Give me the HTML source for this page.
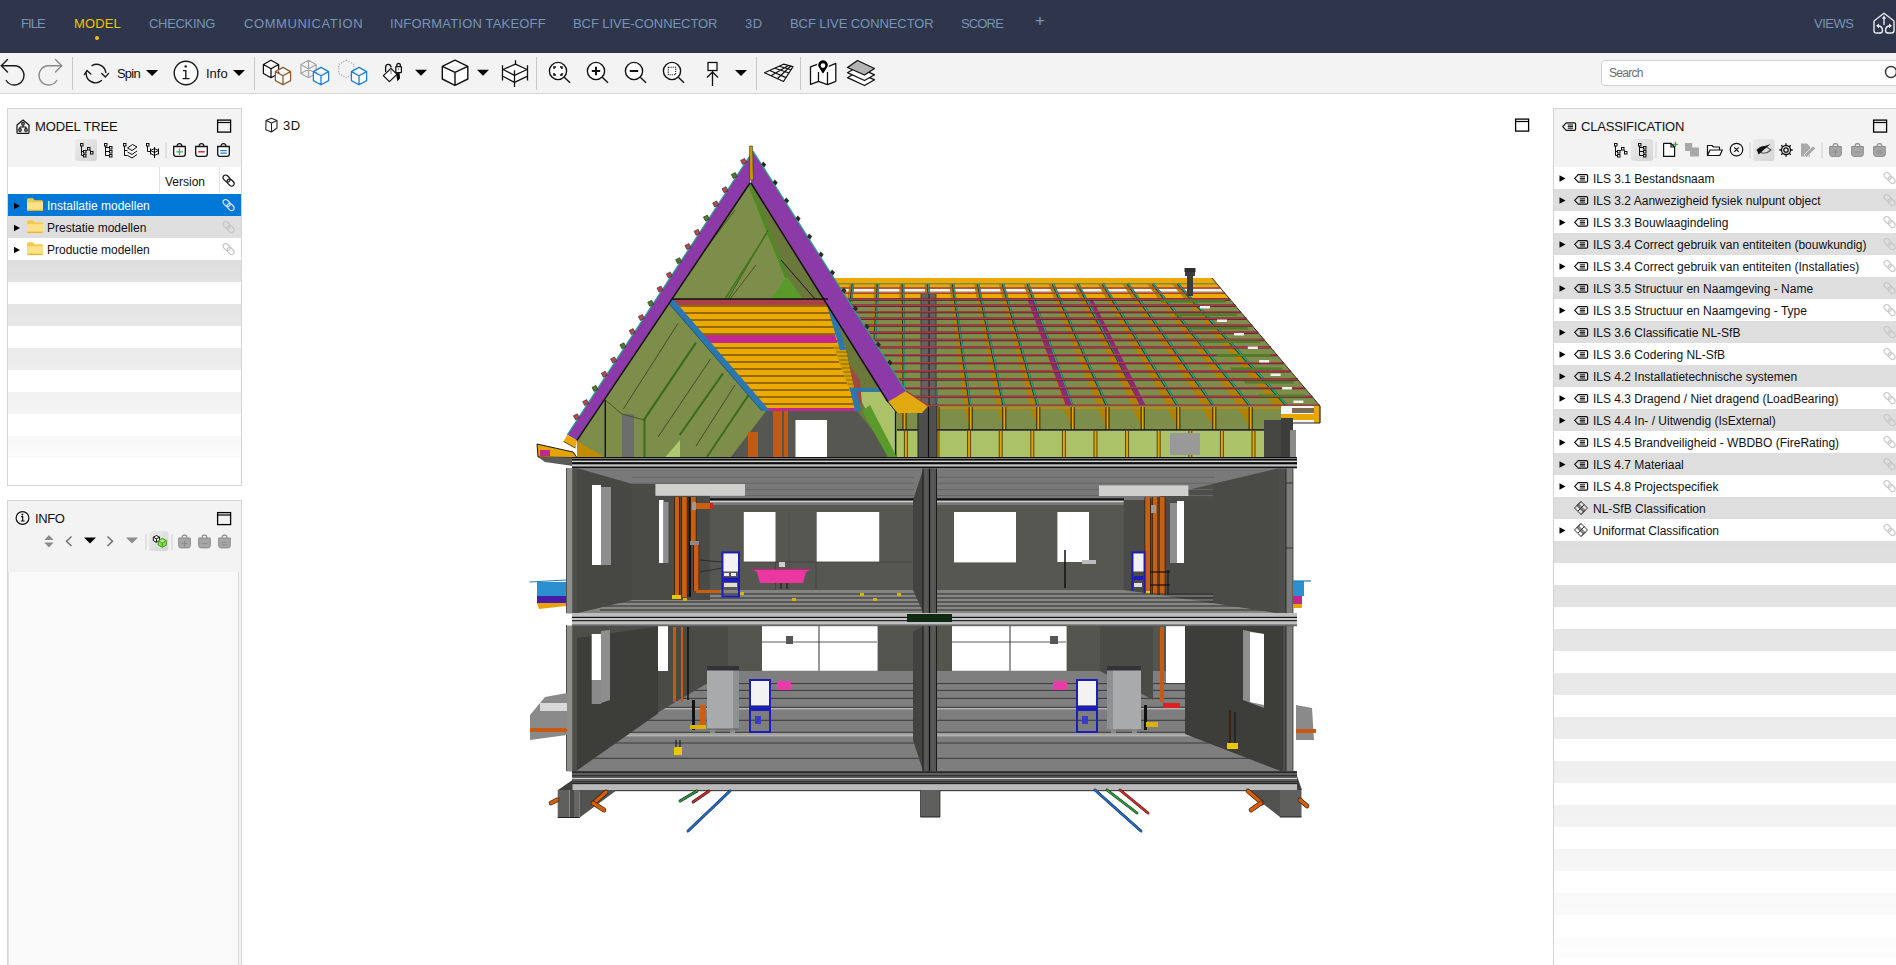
<!DOCTYPE html>
<html><head><meta charset="utf-8">
<style>
*{margin:0;padding:0;box-sizing:border-box}
html,body{width:1896px;height:965px;overflow:hidden;background:#fff;font-family:"Liberation Sans",sans-serif;position:relative}
.a{position:absolute}
#nav{left:0;top:0;width:1896px;height:53px;background:#2f364b}
.nv{position:absolute;top:16px;font-size:13px;color:#7594bb;letter-spacing:0.4px;white-space:nowrap;line-height:15px}
#tb{left:0;top:53px;width:1896px;height:41px;background:#f3f3f3;border-bottom:1px solid #d6d6d6}
.sep{position:absolute;width:1px;background:#c8c8c8}
.tt{position:absolute;font-size:13px;color:#111;white-space:nowrap;line-height:15px}
.panel{position:absolute;background:#f3f3f3;border:1px solid #d4d4d4}
.ptitle{position:absolute;font-size:13px;color:#111;letter-spacing:0.3px;white-space:nowrap;line-height:15px}
.row{position:absolute;height:22px;font-size:12px;color:#111;white-space:nowrap;line-height:22px;padding-top:1px}
svg{position:absolute;overflow:visible}
</style></head><body>
<div id="nav" class="a">
 <div class="nv" style="left:21px;letter-spacing:-0.93px">FILE</div>
 <div class="nv" style="left:74px;letter-spacing:0.15px;color:#f2c200">MODEL</div>
 <div class="a" style="left:95px;top:36px;width:4px;height:4px;border-radius:2px;background:#f2c200"></div>
 <div class="nv" style="left:149px;letter-spacing:-0.31px">CHECKING</div>
 <div class="nv" style="left:244px;letter-spacing:0.57px">COMMUNICATION</div>
 <div class="nv" style="left:390px;letter-spacing:0.18px">INFORMATION TAKEOFF</div>
 <div class="nv" style="left:573px;letter-spacing:-0.07px">BCF LIVE-CONNECTOR</div>
 <div class="nv" style="left:745px;letter-spacing:0.40px">3D</div>
 <div class="nv" style="left:790px;letter-spacing:-0.07px">BCF LIVE CONNECTOR</div>
 <div class="nv" style="left:961px;letter-spacing:-0.85px">SCORE</div>
 <div class="nv" style="left:1035px;font-size:17px;top:13px">+</div>
 <div class="nv" style="left:1814px;letter-spacing:-0.50px">VIEWS</div>
 <svg style="left:1872px;top:11px" width="24" height="24" viewBox="0 0 24 24"><g fill="none" stroke="#e8e8ee" stroke-width="1.4" stroke-linejoin="round" stroke-linecap="round"><path d="M8,22 H4.5 Q2,22 2,19.5 V10 L12,2.2 L22,10 V19.5 Q22,22 19.5,22 H16"/><path d="M8,22 Q10.5,22 10.5,19.5 Q10.5,15.2 6,14.8"/><path d="M16,22 Q13.5,22 13.5,19.5 Q13.5,15.2 18,14.8"/><path d="M12,13.5 V7"/></g><path d="M12,4.6 L9.8,7.8 H14.2 Z M4,14.8 L7,12.4 V17.2 Z M20,14.8 L17,12.4 V17.2 Z" fill="#e8e8ee"/></svg>
</div>
<div id="tb" class="a"></div>
<!-- TOOLBAR -->
<svg style="left:0;top:0" width="1896" height="100" viewBox="0 0 1896 100">
<g fill="none" stroke="#1a1a1a" stroke-width="1.4" stroke-linecap="round">
 <!-- undo -->
 <path d="M7.5,59.5 L1.3,65.8 L7.5,72"/>
 <path d="M1.5,65.8 H14.5 A9.6,9.6 0 1 1 6.2,80.5"/>
 <!-- redo gray -->
 <g stroke="#8a8a8a"><path d="M55.5,59.5 L61.7,65.8 L55.5,72"/><path d="M61.5,65.8 H48.5 A9.6,9.6 0 1 0 56.8,80.5"/></g>
 <!-- spin -->
 <path d="M92,65.6 A9.3,9.3 0 0 1 105.8,72.5"/>
 <path d="M101.5,80.5 A9.3,9.3 0 0 1 86.2,73"/>
 <path d="M101.8,73.6 L105.3,77 L108.6,73.4"/>
 <path d="M84.4,74.6 L87,70.6 L90.8,74"/>
 <!-- info circle -->
 <circle cx="186" cy="73" r="11.8" fill="#fff"/>
 <path d="M183,70.6 H185.8 V78.6 M182.6,78.6 H189.6" stroke-linecap="butt"/>
</g>
<circle cx="185.7" cy="66.4" r="1.2" fill="#1a1a1a"/>
<g fill="#000">
 <path d="M146,70 H158.2 L152.1,76 Z"/>
 <path d="M233,70 H245 L239,76 Z"/>
 <path d="M415,69.8 H427 L421,75.8 Z"/>
 <path d="M477,69.8 H489 L483,75.8 Z"/>
 <path d="M735,70 H747 L741,76 Z"/>
</g>
<g fill="#c8c8c8"><rect x="72" y="57" width="1" height="33"/><rect x="254" y="57" width="1" height="33"/><rect x="536" y="57" width="1" height="33"/><rect x="756" y="57" width="1" height="33"/><rect x="800" y="57" width="1" height="33"/></g>
<!-- cubes -->
<g stroke-width="1.3" stroke-linejoin="round" fill="#fff">
 <g stroke="#111"><path d="M271,60.3 L278.6,64.5 V73.5 L271,77.7 L263.4,73.5 V64.5 Z M263.4,64.5 L271,68.7 L278.6,64.5 M271,68.7 V77.7"/></g>
 <g stroke="#8f5b2a"><path d="M283,67.4 L290.6,71.6 V80.6 L283,84.8 L275.4,80.6 V71.6 Z M275.4,71.6 L283,75.8 L290.6,71.6 M283,75.8 V84.8"/></g>
 <g stroke="#a8a8a8" fill="none"><path d="M308.5,60.3 L316.1,64.5 V73.5 L308.5,77.7 L300.9,73.5 V64.5 Z M300.9,64.5 L316.1,73.5 M316.1,64.5 L300.9,73.5 M308.5,60.3 V77.7"/></g>
 <g stroke="#1a7fdc"><path d="M321,67.4 L328.6,71.6 V80.6 L321,84.8 L313.4,80.6 V71.6 Z M313.4,71.6 L321,75.8 L328.6,71.6 M321,75.8 V84.8"/></g>
 <g stroke="#a0a0a0" fill="none" stroke-dasharray="1,1.6"><path d="M346.3,60.3 L353.9,64.5 V73.5 L346.3,77.7 L338.7,73.5 V64.5 Z"/></g>
 <g stroke="#1a7fdc"><path d="M359,67.4 L366.6,71.6 V80.6 L359,84.8 L351.4,80.6 V71.6 Z M351.4,71.6 L359,75.8 L366.6,71.6 M359,75.8 V84.8"/></g>
 <g stroke="#111" stroke-width="1.4"><path d="M455,60.2 L467.8,66.4 V79 L455,85.3 L442.3,79 V66.4 Z M442.3,66.4 L455,72.4 L467.8,66.4 M455,72.4 V85.3"/></g>
</g>
<!-- paint bucket/lock -->
<g stroke="#111" stroke-width="1.3" fill="#fff" stroke-linejoin="round">
 <path d="M385.6,72 V67.2 Q385.6,64.3 388.3,64.3 Q391,64.3 391,67.5" fill="none"/>
 <path d="M383.4,75.6 L391,68.4 L397,74.4 L389.4,81.6 Z"/>
 <rect x="395.8" y="66.6" width="5.6" height="6" rx="0.5"/>
 <path d="M396.8,66.6 V65.6 Q396.8,63.4 398.6,63.4 Q400.4,63.4 400.4,65.6 V66.6" fill="none"/>
</g>
<path d="M391,70 V74" stroke="#888" stroke-width="1.2"/>
<path d="M398.1,68.5 L399.2,68.5 L398.65,70.6 Z" fill="#111"/>
<path d="M396.2,73.8 L399.6,72.8 L400,78.6 L397.3,81.2 Z" fill="#000"/>
<!-- storey -->
<g stroke="#111" stroke-width="1.3" fill="none" stroke-linejoin="round">
 <path d="M503,69.5 L515.4,64.2 L527,69.5 V76.3 L514.5,82.4 L503,76.3 Z" fill="#fff" stroke="none"/>
 <path d="M502.5,65.3 V80.6 M527.5,65.3 V80.6 M515.5,60.3 V64.2 M514.5,70.3 V87"/>
 <path d="M503,69.5 L515.4,64.2 L527,69.5 L514.5,75.4 Z"/>
 <path d="M503,76.3 L514.5,82.4 L527,76.3"/>
</g>
<!-- zoom icons -->
<g stroke="#111" stroke-width="1.4" fill="#fff">
 <circle cx="558" cy="71" r="8.6"/><path d="M564.3,77.3 L570,82.8"/>
 <circle cx="596" cy="71" r="8.6"/><path d="M602.3,77.3 L608,82.8"/>
 <circle cx="634" cy="71" r="8.6"/><path d="M640.3,77.3 L646,82.8"/>
 <circle cx="672" cy="71" r="8.6"/><path d="M678.3,77.3 L684,82.8"/>
</g>
<g stroke="#111" stroke-width="1.5" fill="none">
 <path d="M554,69 V67 H556 M560,67 H562 V69 M562,73 V75 H560 M556,75 H554 V73"/>
 <path d="M596,66.8 V75.2 M591.8,71 H600.2" stroke-width="2"/>
 <path d="M629.8,71 H638.2" stroke-width="2"/>
 <rect x="668.3" y="67.3" width="7.4" height="7.4" stroke-dasharray="1.2,1" stroke-width="1.1"/>
</g>
<!-- pin -->
<g stroke="#111" stroke-width="1.3" fill="#fff">
 <rect x="708" y="62.5" width="9" height="8"/>
 <path d="M712.5,70.5 V86 M707,77.5 L712.5,72 L718,77.5" fill="none"/>
</g>
<!-- grid plane -->
<g stroke="#111" stroke-width="1.2" fill="none" stroke-linejoin="round">
 <path d="M764.5,72.8 L783.5,64.2 L793,66.6 L783.5,81.5 Z"/>
 <path d="M771,75.8 L788.5,65.5 M777.3,78.8 L790.8,66 M769.8,70.5 L786,77.6 M775,68.2 L789,73 M779.3,66.2 L791,69.7"/>
</g>
<!-- map -->
<g stroke="#111" stroke-width="1.3" fill="#fff" stroke-linejoin="round">
 <path d="M810.5,66.8 L818.5,63.8 L827.5,66.8 L835.8,63.4 V81.3 L827.5,84.6 L818.5,81.3 L810.5,84.4 Z"/>
 <path d="M818.5,72 V81.3 M827.5,72 V84.6" fill="none"/>
</g>
<path d="M823,74.8 L818.2,67.4 A5.4,5.4 0 1 1 827.8,67.4 Z" fill="#000" stroke="#fff" stroke-width="1.2" stroke-linejoin="round"/>
<circle cx="823" cy="65.6" r="2.3" fill="#fff"/>
<!-- layers -->
<g stroke="#111" stroke-width="1.3" stroke-linejoin="round">
 <path d="M847.5,77.7 L857.5,71.8 L874.5,79.8 L864.5,85.5 Z" fill="#fff"/>
 <path d="M847.5,72.7 L857.5,66.8 L874.5,74.8 L864.5,80.5 Z" fill="#fff"/>
 <path d="M847.5,67.5 L857.5,60.5 L874.5,68.5 L864.5,75 Z" fill="#b3b3b3"/>
</g>
</svg>

<div class="tt" style="left:117px;top:66px;letter-spacing:-0.8px">Spin</div>
<div class="tt" style="left:206px;top:66px">Info</div>
<div class="a" style="left:1601px;top:60px;width:300px;height:26px;background:#fff;border:1px solid #d2d2d2;border-radius:4px"></div>
<div class="a" style="left:1609px;top:66px;font-size:12px;color:#6b6b6b;line-height:14px;letter-spacing:-0.7px">Search</div>
<svg style="left:1880px;top:64px" width="16" height="18"><circle cx="11" cy="8" r="5.5" fill="none" stroke="#333" stroke-width="1.4"/></svg>
<!-- PANELS -->
<!-- MODEL TREE PANEL -->
<div class="panel" style="left:7px;top:108px;width:235px;height:378px"></div>
<div class="a" style="left:8px;top:167px;width:233px;height:318px;background:#fff"></div>
<div class="a" style="left:8px;top:260px;width:233px;height:225px;background:repeating-linear-gradient(#dedede 0,#dedede 22px,#fff 22px,#fff 44px)"></div>
<div class="a" style="left:8px;top:260px;width:233px;height:225px;background:linear-gradient(rgba(255,255,255,0),#fff)"></div>
<div class="a" style="left:8px;top:216px;width:233px;height:22px;background:#dedede"></div>
<div class="a" style="left:8px;top:194px;width:233px;height:22px;background:#0078d7"></div>
<div class="a" style="left:159px;top:167px;width:1px;height:26px;background:#e4e4e4"></div>
<div class="a" style="left:219px;top:167px;width:1px;height:26px;background:#e4e4e4"></div>
<div class="ptitle" style="left:35px;top:119px;letter-spacing:-0.12px">MODEL TREE</div>
<div class="row" style="left:165px;top:170px;font-size:12px">Version</div>
<div class="row" style="left:47px;top:194px;color:#fff">Installatie modellen</div>
<div class="row" style="left:47px;top:216px">Prestatie modellen</div>
<div class="row" style="left:47px;top:238px">Productie modellen</div>

<!-- INFO PANEL -->
<div class="panel" style="left:7px;top:500px;width:235px;height:480px"></div>
<div class="a" style="left:8px;top:572px;width:231px;height:400px;background:#f9f9f9;border-right:1px solid #dadada;border-left:1px solid #e0e0e0"></div>
<div class="ptitle" style="left:35px;top:511px;letter-spacing:-0.4px">INFO</div>

<!-- CLASSIFICATION PANEL -->
<div class="panel" style="left:1553px;top:108px;width:360px;height:880px"></div>
<div class="a" style="left:1554px;top:167px;width:342px;height:798px;background:repeating-linear-gradient(#fff 0,#fff 22px,#dedede 22px,#dedede 44px)"></div>
<div class="a" style="left:1554px;top:541px;width:342px;height:424px;background:linear-gradient(rgba(255,255,255,0),rgba(255,255,255,0.97))"></div>
<div class="ptitle" style="left:1581px;top:119px;letter-spacing:-0.2px">CLASSIFICATION</div>
<div class="row" style="left:1593px;top:167px">ILS 3.1 Bestandsnaam</div>
<div class="row" style="left:1593px;top:189px">ILS 3.2 Aanwezigheid fysiek nulpunt object</div>
<div class="row" style="left:1593px;top:211px">ILS 3.3 Bouwlaagindeling</div>
<div class="row" style="left:1593px;top:233px">ILS 3.4 Correct gebruik van entiteiten (bouwkundig)</div>
<div class="row" style="left:1593px;top:255px">ILS 3.4 Correct gebruik van entiteiten (Installaties)</div>
<div class="row" style="left:1593px;top:277px">ILS 3.5 Structuur en Naamgeving - Name</div>
<div class="row" style="left:1593px;top:299px">ILS 3.5 Structuur en Naamgeving - Type</div>
<div class="row" style="left:1593px;top:321px">ILS 3.6 Classificatie NL-SfB</div>
<div class="row" style="left:1593px;top:343px">ILS 3.6 Codering NL-SfB</div>
<div class="row" style="left:1593px;top:365px">ILS 4.2 Installatietechnische systemen</div>
<div class="row" style="left:1593px;top:387px">ILS 4.3 Dragend / Niet dragend (LoadBearing)</div>
<div class="row" style="left:1593px;top:409px">ILS 4.4 In- / Uitwendig (IsExternal)</div>
<div class="row" style="left:1593px;top:431px">ILS 4.5 Brandveiligheid - WBDBO (FireRating)</div>
<div class="row" style="left:1593px;top:453px">ILS 4.7 Materiaal</div>
<div class="row" style="left:1593px;top:475px">ILS 4.8 Projectspecifiek</div>
<div class="row" style="left:1593px;top:497px">NL-SfB Classification</div>
<div class="row" style="left:1593px;top:519px">Uniformat Classification</div>

<!-- 3D label -->
<div class="ptitle" style="left:283px;top:118px;letter-spacing:0.5px">3D</div>
<svg style="left:0;top:0" width="1896" height="965" viewBox="0 0 1896 965">
<defs>
 <linearGradient id="actbg" x1="0" y1="0" x2="1" y2="1"><stop offset="0" stop-color="#ececec"/><stop offset="1" stop-color="#d4d4d4"/></linearGradient>
 <g id="tri"><path d="M0,0 L6,3.3 L0,6.6 Z" fill="#000"/></g>
 <g id="fold"><path d="M0,1.5 Q0,0 1.5,0 H6 L7.5,2 H14.5 Q16,2 16,3.5 V11 Q16,12.6 14.5,12.6 H1.5 Q0,12.6 0,11 Z" fill="#f7c948"/><path d="M0,4 H16 V11 Q16,12.6 14.5,12.6 H1.5 Q0,12.6 0,11 Z" fill="#fde18a"/><path d="M0,11.5 H16 V11 Q16,12.6 14.5,12.6 H1.5 Q0,12.6 0,11 Z" fill="#eaa800"/></g>
 <g id="link" fill="none" stroke-width="1.2"><rect x="-4" y="-2.6" width="8" height="5.2" rx="2.6" transform="translate(4.6,4.6) rotate(45)"/><rect x="-4" y="-2.6" width="8" height="5.2" rx="2.6" transform="translate(8.6,8.6) rotate(45)"/></g>
 <g id="tag"><path d="M0.7,4.6 L4.2,0.8 H12.5 Q13.6,0.8 13.6,1.9 V7.3 Q13.6,8.4 12.5,8.4 H4.2 Z" fill="none" stroke="#111" stroke-width="1.2" stroke-linejoin="round"/><path d="M5.8,3 H11 M5.8,4.6 H11 M5.8,6.2 H11" stroke="#111" stroke-width="1"/></g>
 <g id="maxi"><rect x="0.6" y="0.6" width="13" height="12" fill="none" stroke="#000" stroke-width="1.3"/><path d="M0.6,3 H13.6" stroke="#000" stroke-width="1.2"/></g>
 <g id="bag"><path d="M0.7,3.5 H12.3 V11 Q12.3,13.4 10,13.4 H3 Q0.7,13.4 0.7,11 Z" fill="#fff" stroke-width="1.3"/><path d="M4,3.5 Q4,0.6 6.5,0.6 Q9,0.6 9,3.5" fill="none" stroke-width="1.2"/></g>
 <g id="gbag"><path d="M0.7,3.5 H12.3 V11 Q12.3,13.4 10,13.4 H3 Q0.7,13.4 0.7,11 Z" fill="#a6a6a6" stroke="#8c8c8c" stroke-width="1"/><path d="M4,3.5 Q4,0.6 6.5,0.6 Q9,0.6 9,3.5" fill="none" stroke="#8c8c8c" stroke-width="1.1"/></g>
 <g id="treei"><g fill="none" stroke="#111" stroke-width="1"><rect x="0.5" y="0.5" width="2.5" height="2.5"/><rect x="3.5" y="7.5" width="2.5" height="2.5"/><rect x="3.5" y="11.5" width="2.5" height="2.5"/><rect x="7.5" y="4.5" width="2.5" height="2.5"/><rect x="10.5" y="8.5" width="2.5" height="2.5"/><path d="M1.5,3 V12.5 H3.5 M1.5,8.5 H3.5 M6,8 L7.5,6.5 M10,7 L11,8.5"/></g></g>
 <g id="treel"><g fill="none" stroke="#111" stroke-width="1"><rect x="0.5" y="0.5" width="2.5" height="2.5"/><rect x="5.5" y="3.5" width="2.5" height="2.5"/><rect x="5.5" y="7.5" width="2.5" height="2.5"/><rect x="5.5" y="11.5" width="2.5" height="2.5"/><path d="M1.5,3 V12.5 H5.5 M1.5,4.5 H5.5 M1.5,8.5 H5.5"/></g></g>
</defs>
<!-- model tree icons -->
<g stroke="#111" stroke-width="1.2" fill="none" stroke-linejoin="round">
 <path d="M17,125 L23,120 L29,125 V132.6 Q29,133.3 28.3,133.3 H17.7 Q17,133.3 17,132.6 Z"/>
 <circle cx="23" cy="123.7" r="1.3"/><circle cx="20" cy="130" r="1.3"/><circle cx="26" cy="130" r="1.3"/><path d="M23,125 V127 H20 V128.7 M23,127 H26 V128.7"/>
</g>
<use href="#maxi" x="217" y="119.5"/>
<rect x="75" y="139" width="22" height="22" rx="3" fill="url(#actbg)"/>
<use href="#treei" x="80" y="143"/>
<use href="#treel" x="104" y="143"/>
<g fill="none" stroke="#111" stroke-width="1"><rect x="123.5" y="143.5" width="2.5" height="2.5"/><path d="M124.5,146 V155.5 H127.5 M124.5,150.5 H127.5"/><path d="M127.5,148 L132.5,144.5 L137,147 L132,150.5 Z M127.5,152 L132,154.5 L137,151 M127.5,155.5 L132,158 L137,154.5"/></g>
<g fill="none" stroke="#111" stroke-width="1"><rect x="146.5" y="143.5" width="2.5" height="2.5"/><path d="M147.5,146 V151.5 H150 M150.5,148.5 V154.5 M158.5,148.5 V154.5 M154.5,147 V158 M150.5,150.5 L154.5,148.5 L158.5,150.5 L154.5,152.5 Z M150.5,153.5 L154.5,155.5 L158.5,153.5"/></g>
<rect x="165.5" y="142" width="1" height="16" fill="#d0d0d0"/>
<g stroke="#111"><use href="#bag" x="173" y="143"/><use href="#bag" x="195" y="143"/><use href="#bag" x="217" y="143"/></g>
<path d="M179.5,148.5 V155 M176.3,151.8 H182.7" stroke="#1db954" stroke-width="1.3"/>
<path d="M198.3,151.8 H204.7" stroke="#e81123" stroke-width="1.4"/>
<path d="M220.3,150.6 H226.7 M220.3,153.2 H226.7" stroke="#1a7fdc" stroke-width="1.2"/>
<g stroke="#111"><use href="#link" x="222" y="174"/></g>
<!-- tree rows -->
<use href="#tri" x="14" y="202.7"/><use href="#tri" x="14" y="224.7"/><use href="#tri" x="14" y="246.7"/>
<use href="#fold" x="27" y="198.2"/><use href="#fold" x="27" y="220.2"/><use href="#fold" x="27" y="242.2"/>
<g stroke="#e8e8ff"><use href="#link" x="222" y="198.5"/></g>
<g stroke="#c4c4c4"><use href="#link" x="222" y="220.5"/><use href="#link" x="222" y="242.5"/></g>
<!-- info panel icons -->
<g stroke="#111" stroke-width="1.2" fill="none"><circle cx="22.5" cy="518" r="6.4"/><path d="M21,516.6 H22.7 V521 M20.8,521 H24.6"/></g>
<circle cx="22.4" cy="514.5" r="0.9" fill="#111"/>
<use href="#maxi" x="217" y="512"/>
<path d="M44.3,540 L49,535 L53.6,540 Z M44.3,542.5 L49,547.5 L53.6,542.5 Z" fill="#8c8c8c"/>
<path d="M71.5,536.5 L66.5,541.2 L71.5,546" fill="none" stroke="#6f6f6f" stroke-width="1.5"/>
<path d="M84,537.5 H96 L90,543.5 Z" fill="#000"/>
<path d="M107.5,536.5 L112.5,541.2 L107.5,546" fill="none" stroke="#6f6f6f" stroke-width="1.5"/>
<path d="M126,537.5 H138 L132,543.5 Z" fill="#8c8c8c"/>
<rect x="145.5" y="534" width="1" height="16" fill="#d0d0d0"/>
<rect x="149" y="531" width="19.5" height="20" rx="3" fill="url(#actbg)"/>
<g stroke="#111" stroke-width="1" fill="#fff"><path d="M156.4,535.5 L159.5,537.2 V540.6 L156.4,542.3 L153.3,540.6 V537.2 Z M153.3,537.2 L156.4,538.9 L159.5,537.2 M156.4,538.9 V542.3"/></g>
<g stroke="#3d9a1a" stroke-width="0.9" fill="#7ce03a"><path d="M162.3,538.3 L166.4,540.6 V545 L162.3,547.3 L158.2,545 V540.6 Z M158.2,540.6 L162.3,542.9 L166.4,540.6 M162.3,542.9 V547.3"/></g>
<rect x="171.5" y="534" width="1" height="16" fill="#d0d0d0"/>
<use href="#gbag" x="178" y="534.5"/><use href="#gbag" x="198" y="534.5"/><use href="#gbag" x="218" y="534.5"/>
<path d="M184.5,540.8 V546.5 M181.7,543.6 H187.3" stroke="#8c8c8c" stroke-width="1"/>
<path d="M201.7,543.6 H207.3" stroke="#8c8c8c" stroke-width="1"/>
<path d="M221.7,542.4 H227.3 M221.7,544.8 H227.3" stroke="#8c8c8c" stroke-width="1"/>
<!-- 3D label icon -->
<g stroke="#222" stroke-width="1.1" fill="none" stroke-linejoin="round"><path d="M266,120.5 L271.5,118.3 L277,120.5 V128 L271.5,132 L265.8,129.8 Z M266,120.5 L271.5,123 L277,120.5 M271.5,123 V132"/></g>
<use href="#maxi" x="1515" y="118.5"/>
<!-- classification icons -->
<use href="#tag" x="1562" y="122"/>
<use href="#maxi" x="1873" y="119.5"/>
<use href="#treei" x="1614" y="143"/>
<rect x="1631" y="139" width="22" height="22" rx="3" fill="url(#actbg)"/>
<use href="#treel" x="1638" y="143"/>
<rect x="1655.5" y="142" width="1" height="16" fill="#d0d0d0"/>
<path d="M1663.6,143.4 H1671 L1674.6,147 V156.4 H1663.6 Z M1671,143.4 V147 H1674.6" fill="#fff" stroke="#111" stroke-width="1.2" stroke-linejoin="round"/>
<path d="M1675.5,141.8 V147 M1673,144.4 H1678" stroke="#1db954" stroke-width="1.2"/>
<path d="M1685,143 H1692.2 V147.5 H1699 V156.6 H1690 V151 H1685 Z" fill="#a8a8a8"/>
<path d="M1707.5,155.5 V145.5 H1712 L1713.5,147 H1719.5 V150 M1707.5,155.5 L1710,150 H1722.3 L1719.8,155.5 Z" fill="#fff" stroke="#111" stroke-width="1.2" stroke-linejoin="round"/>
<g fill="none" stroke="#111" stroke-width="1.2"><circle cx="1736.5" cy="149.6" r="6.3"/><path d="M1734.3,147.4 L1738.7,151.8 M1738.7,147.4 L1734.3,151.8"/></g>
<rect x="1749.5" y="142" width="1" height="16" fill="#d0d0d0"/>
<rect x="1753" y="139" width="21.5" height="22" rx="3" fill="url(#actbg)"/>
<path d="M1757,150 Q1763.5,143.5 1771,150 Q1763.5,156.5 1757,150 Z" fill="none" stroke="#555" stroke-width="1.1"/>
<path d="M1757,150 Q1761,145.5 1765,146 L1770.5,144 L1758.5,154.5 Z" fill="#111"/>
<g fill="none" stroke="#111" stroke-width="1.3"><circle cx="1786" cy="150" r="2.2"/><path d="M1786,143.3 V145.3 M1786,154.7 V156.7 M1779.3,150 H1781.3 M1790.7,150 H1792.7 M1781.3,145.3 L1782.7,146.7 M1789.3,153.3 L1790.7,154.7 M1781.3,154.7 L1782.7,153.3 M1789.3,146.7 L1790.7,145.3"/><circle cx="1786" cy="150" r="4.5"/></g>
<path d="M1801,143.5 H1807 L1810,146.5 V156.4 H1801 Z" fill="#a8a8a8"/>
<path d="M1804,155 L1813,146 L1815.5,148.5 L1806.5,157.5 Z" fill="#a8a8a8" stroke="#f3f3f3" stroke-width="0.8"/>
<rect x="1821.5" y="142" width="1" height="16" fill="#d0d0d0"/>
<use href="#gbag" x="1829" y="143"/><use href="#gbag" x="1851" y="143"/><use href="#gbag" x="1873" y="143"/>
<path d="M1835.5,149 V155 M1832.5,152 H1838.5" stroke="#8c8c8c" stroke-width="1"/>
<path d="M1854.5,152 H1860.5" stroke="#8c8c8c" stroke-width="1"/>
<path d="M1876.5,150.8 H1882.5 M1876.5,153.2 H1882.5" stroke="#8c8c8c" stroke-width="1"/>
<!-- classification rows -->
<g id="crows">
<use href="#tri" x="1559.5" y="175.2"/>
<use href="#tag" x="1574" y="173.8"/>
<g stroke="#c8c8c8"><use href="#link" x="1883" y="171.5"/></g>
<use href="#tri" x="1559.5" y="197.2"/>
<use href="#tag" x="1574" y="195.8"/>
<g stroke="#c8c8c8"><use href="#link" x="1883" y="193.5"/></g>
<use href="#tri" x="1559.5" y="219.2"/>
<use href="#tag" x="1574" y="217.8"/>
<g stroke="#c8c8c8"><use href="#link" x="1883" y="215.5"/></g>
<use href="#tri" x="1559.5" y="241.2"/>
<use href="#tag" x="1574" y="239.8"/>
<g stroke="#c8c8c8"><use href="#link" x="1883" y="237.5"/></g>
<use href="#tri" x="1559.5" y="263.2"/>
<use href="#tag" x="1574" y="261.8"/>
<g stroke="#c8c8c8"><use href="#link" x="1883" y="259.5"/></g>
<use href="#tri" x="1559.5" y="285.2"/>
<use href="#tag" x="1574" y="283.8"/>
<g stroke="#c8c8c8"><use href="#link" x="1883" y="281.5"/></g>
<use href="#tri" x="1559.5" y="307.2"/>
<use href="#tag" x="1574" y="305.8"/>
<g stroke="#c8c8c8"><use href="#link" x="1883" y="303.5"/></g>
<use href="#tri" x="1559.5" y="329.2"/>
<use href="#tag" x="1574" y="327.8"/>
<g stroke="#c8c8c8"><use href="#link" x="1883" y="325.5"/></g>
<use href="#tri" x="1559.5" y="351.2"/>
<use href="#tag" x="1574" y="349.8"/>
<g stroke="#c8c8c8"><use href="#link" x="1883" y="347.5"/></g>
<use href="#tri" x="1559.5" y="373.2"/>
<use href="#tag" x="1574" y="371.8"/>
<use href="#tri" x="1559.5" y="395.2"/>
<use href="#tag" x="1574" y="393.8"/>
<g stroke="#c8c8c8"><use href="#link" x="1883" y="391.5"/></g>
<use href="#tri" x="1559.5" y="417.2"/>
<use href="#tag" x="1574" y="415.8"/>
<g stroke="#c8c8c8"><use href="#link" x="1883" y="413.5"/></g>
<use href="#tri" x="1559.5" y="439.2"/>
<use href="#tag" x="1574" y="437.8"/>
<g stroke="#c8c8c8"><use href="#link" x="1883" y="435.5"/></g>
<use href="#tri" x="1559.5" y="461.2"/>
<use href="#tag" x="1574" y="459.8"/>
<g stroke="#c8c8c8"><use href="#link" x="1883" y="457.5"/></g>
<use href="#tri" x="1559.5" y="483.2"/>
<use href="#tag" x="1574" y="481.8"/>
<g stroke="#c8c8c8"><use href="#link" x="1883" y="479.5"/></g>
<g transform="translate(1574,501.0)" fill="none" stroke="#333" stroke-width="1"><path d="M7,0.5 L13.5,7 L7,13.5 L0.5,7 Z"/><path d="M3.5,4 L10,10.5 M4,10 L10.5,3.5 M7,0.5 L3,4.5 L9.5,11 M7,13.5 L11,9.5 L4.5,3"/></g>
<use href="#tri" x="1559.5" y="527.2"/>
<g transform="translate(1574,523.0)" fill="none" stroke="#333" stroke-width="1"><path d="M7,0.5 L13.5,7 L7,13.5 L0.5,7 Z"/><path d="M3.5,4 L10,10.5 M4,10 L10.5,3.5 M7,0.5 L3,4.5 L9.5,11 M7,13.5 L11,9.5 L4.5,3"/></g>
<g stroke="#c8c8c8"><use href="#link" x="1883" y="523.5"/></g>
</g>
</svg>


<!-- 3D -->
<svg style="left:0;top:0" width="1896" height="965" viewBox="0 0 1896 965" shape-rendering="geometricPrecision">
<polygon points="800.0,278.0 1212.0,278.0 1320.0,406.0 880.0,406.0" fill="#7d8d4a" />
<polygon points="800.0,278.0 1212.0,278.0 1216.2,283.0 800.0,283.0" fill="#eca900" />
<polygon points="800.0,284.5 1217.5,284.5 1221.3,289.0 800.0,289.0" fill="#eca900" />
<polygon points="800.0,292.0 1223.8,292.0 1228.9,298.0 800.0,298.0" fill="#eca900" />
<polygon points="800.0,289.0 1221.3,289.0 1223.4,291.5 800.0,291.5" fill="#f4f4f0" />
<polygon points="824.5,284.0 828.0,284.0 805.0,406.0 799.5,406.0" fill="#b08200" />
<line x1="828.0" y1="284.0" x2="805.0" y2="406.0" stroke="#0e3a30" stroke-width="2.60" />
<line x1="828.4" y1="284.0" x2="805.4" y2="406.0" stroke="#1fa886" stroke-width="1.60" />
<polygon points="849.5,284.0 853.0,284.0 838.0,406.0 832.5,406.0" fill="#b08200" />
<line x1="853.0" y1="284.0" x2="838.0" y2="406.0" stroke="#0e3a30" stroke-width="2.60" />
<line x1="853.4" y1="284.0" x2="838.4" y2="406.0" stroke="#1fa886" stroke-width="1.60" />
<polygon points="874.5,284.0 878.0,284.0 871.0,406.0 865.5,406.0" fill="#b08200" />
<line x1="878.0" y1="284.0" x2="871.0" y2="406.0" stroke="#0e3a30" stroke-width="2.60" />
<line x1="878.4" y1="284.0" x2="871.4" y2="406.0" stroke="#1fa886" stroke-width="1.60" />
<polygon points="899.5,284.0 903.0,284.0 904.0,406.0 898.5,406.0" fill="#b08200" />
<line x1="903.0" y1="284.0" x2="904.0" y2="406.0" stroke="#0e3a30" stroke-width="2.60" />
<line x1="903.4" y1="284.0" x2="904.4" y2="406.0" stroke="#1fa886" stroke-width="1.60" />
<polygon points="924.5,284.0 928.0,284.0 937.0,406.0 931.5,406.0" fill="#b08200" />
<line x1="928.0" y1="284.0" x2="937.0" y2="406.0" stroke="#0e3a30" stroke-width="2.60" />
<line x1="928.4" y1="284.0" x2="937.4" y2="406.0" stroke="#1fa886" stroke-width="1.60" />
<polygon points="949.2,284.0 953.0,284.0 970.2,406.0 964.0,406.0" fill="#b08200" />
<line x1="953.0" y1="284.0" x2="970.2" y2="406.0" stroke="#0e3a30" stroke-width="2.60" />
<line x1="953.4" y1="284.0" x2="970.6" y2="406.0" stroke="#1fa886" stroke-width="1.60" />
<polygon points="974.0,284.0 978.0,284.0 1003.8,406.0 996.9,406.0" fill="#b08200" />
<line x1="978.0" y1="284.0" x2="1003.8" y2="406.0" stroke="#0e3a30" stroke-width="2.60" />
<line x1="978.4" y1="284.0" x2="1004.2" y2="406.0" stroke="#1fa886" stroke-width="1.60" />
<polygon points="998.8,284.0 1003.0,284.0 1037.8,406.0 1030.2,406.0" fill="#b08200" />
<line x1="1003.0" y1="284.0" x2="1037.8" y2="406.0" stroke="#0e3a30" stroke-width="2.60" />
<line x1="1003.4" y1="284.0" x2="1038.2" y2="406.0" stroke="#1fa886" stroke-width="1.60" />
<polygon points="1023.5,284.0 1028.0,284.0 1072.2,406.0 1063.9,406.0" fill="#b08200" />
<line x1="1028.0" y1="284.0" x2="1072.2" y2="406.0" stroke="#0e3a30" stroke-width="2.60" />
<line x1="1028.4" y1="284.0" x2="1072.6" y2="406.0" stroke="#1fa886" stroke-width="1.60" />
<polygon points="1048.2,284.0 1053.0,284.0 1107.0,406.0 1098.0,406.0" fill="#b08200" />
<line x1="1053.0" y1="284.0" x2="1107.0" y2="406.0" stroke="#0e3a30" stroke-width="2.60" />
<line x1="1053.4" y1="284.0" x2="1107.4" y2="406.0" stroke="#1fa886" stroke-width="1.60" />
<polygon points="1073.0,284.0 1078.0,284.0 1142.2,406.0 1132.5,406.0" fill="#b08200" />
<line x1="1078.0" y1="284.0" x2="1142.2" y2="406.0" stroke="#0e3a30" stroke-width="2.60" />
<line x1="1078.4" y1="284.0" x2="1142.6" y2="406.0" stroke="#1fa886" stroke-width="1.60" />
<polygon points="1097.8,284.0 1103.0,284.0 1177.8,406.0 1167.4,406.0" fill="#b08200" />
<line x1="1103.0" y1="284.0" x2="1177.8" y2="406.0" stroke="#0e3a30" stroke-width="2.60" />
<line x1="1103.4" y1="284.0" x2="1178.2" y2="406.0" stroke="#1fa886" stroke-width="1.60" />
<polygon points="1122.5,284.0 1128.0,284.0 1213.8,406.0 1202.7,406.0" fill="#b08200" />
<line x1="1128.0" y1="284.0" x2="1213.8" y2="406.0" stroke="#0e3a30" stroke-width="2.60" />
<line x1="1128.4" y1="284.0" x2="1214.2" y2="406.0" stroke="#1fa886" stroke-width="1.60" />
<polygon points="1147.2,284.0 1153.0,284.0 1250.2,406.0 1238.4,406.0" fill="#b08200" />
<line x1="1153.0" y1="284.0" x2="1250.2" y2="406.0" stroke="#0e3a30" stroke-width="2.60" />
<line x1="1153.4" y1="284.0" x2="1250.6" y2="406.0" stroke="#1fa886" stroke-width="1.60" />
<polygon points="1172.0,284.0 1178.0,284.0 1287.0,406.0 1274.5,406.0" fill="#b08200" />
<line x1="1178.0" y1="284.0" x2="1287.0" y2="406.0" stroke="#0e3a30" stroke-width="2.60" />
<line x1="1178.4" y1="284.0" x2="1287.4" y2="406.0" stroke="#1fa886" stroke-width="1.60" />
<rect x="921.0" y="294.0" width="15.0" height="164.0" fill="#62625f" />
<line x1="921.0" y1="294.0" x2="921.0" y2="458.0" stroke="#333" stroke-width="0.80" />
<line x1="929.0" y1="294.0" x2="929.0" y2="458.0" stroke="#1a1a1a" stroke-width="1.00" />
<line x1="936.0" y1="294.0" x2="936.0" y2="458.0" stroke="#333" stroke-width="0.80" />
<polygon points="1027.0,298.0 1032.0,298.0 1072.0,406.0 1066.0,406.0" fill="#8e2a7a" />
<polygon points="1088.0,298.0 1092.0,298.0 1146.0,406.0 1140.0,406.0" fill="#8e2a7a" />
<line x1="800.0" y1="288.0" x2="1220.4" y2="288.0" stroke="#a43d4c" stroke-width="1.40" />
<line x1="800.0" y1="293.3" x2="1224.9" y2="293.3" stroke="#a43d4c" stroke-width="1.40" />
<line x1="800.0" y1="299.5" x2="1230.1" y2="299.5" stroke="#5a1e28" stroke-width="2.40" />
<line x1="800.0" y1="299.2" x2="1230.1" y2="299.2" stroke="#a43d4c" stroke-width="1.60" />
<line x1="800.0" y1="305.7" x2="1235.4" y2="305.7" stroke="#5a1e28" stroke-width="2.40" />
<line x1="800.0" y1="305.4" x2="1235.4" y2="305.4" stroke="#a43d4c" stroke-width="1.60" />
<line x1="800.0" y1="312.1" x2="1240.8" y2="312.1" stroke="#5a1e28" stroke-width="2.40" />
<line x1="800.0" y1="311.8" x2="1240.8" y2="311.8" stroke="#a43d4c" stroke-width="1.60" />
<line x1="800.0" y1="318.8" x2="1246.4" y2="318.8" stroke="#5a1e28" stroke-width="2.40" />
<line x1="800.0" y1="318.5" x2="1246.4" y2="318.5" stroke="#a43d4c" stroke-width="1.60" />
<line x1="800.0" y1="325.6" x2="1252.2" y2="325.6" stroke="#5a1e28" stroke-width="2.40" />
<line x1="800.0" y1="325.3" x2="1252.2" y2="325.3" stroke="#a43d4c" stroke-width="1.60" />
<line x1="800.0" y1="332.7" x2="1258.1" y2="332.7" stroke="#5a1e28" stroke-width="2.40" />
<line x1="800.0" y1="332.4" x2="1258.1" y2="332.4" stroke="#a43d4c" stroke-width="1.60" />
<line x1="800.0" y1="340.0" x2="1264.3" y2="340.0" stroke="#5a1e28" stroke-width="2.40" />
<line x1="800.0" y1="339.7" x2="1264.3" y2="339.7" stroke="#a43d4c" stroke-width="1.60" />
<line x1="800.0" y1="347.4" x2="1270.6" y2="347.4" stroke="#5a1e28" stroke-width="2.40" />
<line x1="800.0" y1="347.1" x2="1270.6" y2="347.1" stroke="#a43d4c" stroke-width="1.60" />
<line x1="800.0" y1="355.1" x2="1277.1" y2="355.1" stroke="#5a1e28" stroke-width="2.40" />
<line x1="800.0" y1="354.8" x2="1277.1" y2="354.8" stroke="#a43d4c" stroke-width="1.60" />
<line x1="800.0" y1="363.1" x2="1283.8" y2="363.1" stroke="#5a1e28" stroke-width="2.40" />
<line x1="800.0" y1="362.8" x2="1283.8" y2="362.8" stroke="#a43d4c" stroke-width="1.60" />
<line x1="800.0" y1="371.2" x2="1290.6" y2="371.2" stroke="#5a1e28" stroke-width="2.40" />
<line x1="800.0" y1="370.9" x2="1290.6" y2="370.9" stroke="#a43d4c" stroke-width="1.60" />
<line x1="800.0" y1="379.5" x2="1297.7" y2="379.5" stroke="#5a1e28" stroke-width="2.40" />
<line x1="800.0" y1="379.2" x2="1297.7" y2="379.2" stroke="#a43d4c" stroke-width="1.60" />
<line x1="800.0" y1="388.1" x2="1304.9" y2="388.1" stroke="#5a1e28" stroke-width="2.40" />
<line x1="800.0" y1="387.8" x2="1304.9" y2="387.8" stroke="#a43d4c" stroke-width="1.60" />
<line x1="800.0" y1="396.9" x2="1312.3" y2="396.9" stroke="#5a1e28" stroke-width="2.40" />
<line x1="800.0" y1="396.6" x2="1312.3" y2="396.6" stroke="#a43d4c" stroke-width="1.60" />
<line x1="800.0" y1="405.9" x2="1319.9" y2="405.9" stroke="#5a1e28" stroke-width="2.40" />
<line x1="800.0" y1="405.6" x2="1319.9" y2="405.6" stroke="#a43d4c" stroke-width="1.60" />
<line x1="800.0" y1="406.0" x2="1320.0" y2="406.0" stroke="#a43d4c" stroke-width="2.00" />
<polygon points="1160.0,300.0 1224.6,300.0 1226.1,302.5 1161.5,302.5" fill="#4f7d2a" />
<rect x="1200.0" y="306.0" width="10.0" height="2.5" fill="#f0f0f0" />
<polygon points="1174.0,313.5 1236.0,313.5 1237.5,316.0 1175.5,316.0" fill="#4f7d2a" />
<rect x="1217.0" y="319.5" width="10.0" height="2.5" fill="#f0f0f0" />
<polygon points="1188.0,327.0 1247.3,327.0 1248.8,329.5 1189.5,329.5" fill="#4f7d2a" />
<rect x="1234.0" y="333.0" width="10.0" height="2.5" fill="#f0f0f0" />
<polygon points="1202.0,340.5 1258.7,340.5 1260.2,343.0 1203.5,343.0" fill="#4f7d2a" />
<rect x="1247.8" y="346.5" width="10.0" height="2.5" fill="#f0f0f0" />
<polygon points="1216.0,354.0 1270.1,354.0 1271.6,356.5 1217.5,356.5" fill="#4f7d2a" />
<rect x="1259.2" y="360.0" width="10.0" height="2.5" fill="#f0f0f0" />
<polygon points="1230.0,367.5 1281.5,367.5 1283.0,370.0 1231.5,370.0" fill="#4f7d2a" />
<rect x="1270.6" y="373.5" width="10.0" height="2.5" fill="#f0f0f0" />
<polygon points="1244.0,381.0 1292.9,381.0 1294.4,383.5 1245.5,383.5" fill="#4f7d2a" />
<rect x="1282.0" y="387.0" width="10.0" height="2.5" fill="#f0f0f0" />
<polygon points="1258.0,394.5 1304.3,394.5 1305.8,397.0 1259.5,397.0" fill="#4f7d2a" />
<rect x="1293.4" y="400.5" width="10.0" height="2.5" fill="#f0f0f0" />
<line x1="1212.0" y1="278.0" x2="1320.0" y2="406.0" stroke="#3a3020" stroke-width="1.00" />
<polygon points="1185.0,270.0 1195.0,270.0 1195.0,276.0 1193.0,276.0 1193.0,296.0 1187.0,296.0 1187.0,276.0 1185.0,276.0" fill="#3c3c3c" />
<rect x="1184.5" y="268.0" width="11.0" height="4.0" fill="#2e2e2e" />
<polygon points="1281.0,406.0 1320.0,406.0 1320.0,423.0 1286.0,423.0" fill="#f4f4f2" />
<rect x="1281.0" y="414.0" width="39.0" height="6.0" fill="#e6a800" />
<rect x="1314.0" y="406.0" width="6.0" height="17.0" fill="#e6a800" />
<rect x="1292.0" y="408.0" width="22.0" height="5.0" fill="#7a6a50" />
<line x1="1281.0" y1="423.0" x2="1320.0" y2="423.0" stroke="#222" stroke-width="1.20" />
<line x1="1320.0" y1="406.0" x2="1320.0" y2="423.0" stroke="#222" stroke-width="1.20" />
<polygon points="897.0,406.0 1281.0,406.0 1281.0,430.0 897.0,430.0" fill="#7d8d4a" />
<rect x="897.0" y="407.0" width="384.0" height="2.0" fill="#b88a10" />
<polygon points="865.5,409.0 871.0,409.0 871.0,428.0" fill="#b08200" />
<rect x="870.0" y="407.0" width="3.0" height="23.0" fill="#e6a400" />
<line x1="870.0" y1="407.0" x2="870.0" y2="430.0" stroke="#111" stroke-width="0.90" />
<line x1="873.0" y1="407.0" x2="873.0" y2="430.0" stroke="#111" stroke-width="0.90" />
<polygon points="898.5,409.0 904.0,409.0 904.0,428.0" fill="#b08200" />
<rect x="903.0" y="407.0" width="3.0" height="23.0" fill="#e6a400" />
<line x1="903.0" y1="407.0" x2="903.0" y2="430.0" stroke="#111" stroke-width="0.90" />
<line x1="906.0" y1="407.0" x2="906.0" y2="430.0" stroke="#111" stroke-width="0.90" />
<polygon points="931.5,409.0 937.0,409.0 937.0,428.0" fill="#b08200" />
<rect x="936.0" y="407.0" width="3.0" height="23.0" fill="#e6a400" />
<line x1="936.0" y1="407.0" x2="936.0" y2="430.0" stroke="#111" stroke-width="0.90" />
<line x1="939.0" y1="407.0" x2="939.0" y2="430.0" stroke="#111" stroke-width="0.90" />
<polygon points="964.0,409.0 970.2,409.0 970.2,428.0" fill="#b08200" />
<rect x="969.2" y="407.0" width="3.0" height="23.0" fill="#e6a400" />
<line x1="969.2" y1="407.0" x2="969.2" y2="430.0" stroke="#111" stroke-width="0.90" />
<line x1="972.2" y1="407.0" x2="972.2" y2="430.0" stroke="#111" stroke-width="0.90" />
<polygon points="996.9,409.0 1003.8,409.0 1003.8,428.0" fill="#b08200" />
<rect x="1002.8" y="407.0" width="3.0" height="23.0" fill="#e6a400" />
<line x1="1002.8" y1="407.0" x2="1002.8" y2="430.0" stroke="#111" stroke-width="0.90" />
<line x1="1005.8" y1="407.0" x2="1005.8" y2="430.0" stroke="#111" stroke-width="0.90" />
<polygon points="1030.2,409.0 1037.8,409.0 1037.8,428.0" fill="#b08200" />
<rect x="1036.8" y="407.0" width="3.0" height="23.0" fill="#e6a400" />
<line x1="1036.8" y1="407.0" x2="1036.8" y2="430.0" stroke="#111" stroke-width="0.90" />
<line x1="1039.8" y1="407.0" x2="1039.8" y2="430.0" stroke="#111" stroke-width="0.90" />
<polygon points="1063.9,409.0 1072.2,409.0 1072.2,428.0" fill="#b08200" />
<rect x="1071.2" y="407.0" width="3.0" height="23.0" fill="#e6a400" />
<line x1="1071.2" y1="407.0" x2="1071.2" y2="430.0" stroke="#111" stroke-width="0.90" />
<line x1="1074.2" y1="407.0" x2="1074.2" y2="430.0" stroke="#111" stroke-width="0.90" />
<polygon points="1098.0,409.0 1107.0,409.0 1107.0,428.0" fill="#b08200" />
<rect x="1106.0" y="407.0" width="3.0" height="23.0" fill="#e6a400" />
<line x1="1106.0" y1="407.0" x2="1106.0" y2="430.0" stroke="#111" stroke-width="0.90" />
<line x1="1109.0" y1="407.0" x2="1109.0" y2="430.0" stroke="#111" stroke-width="0.90" />
<polygon points="1132.5,409.0 1142.2,409.0 1142.2,428.0" fill="#b08200" />
<rect x="1141.2" y="407.0" width="3.0" height="23.0" fill="#e6a400" />
<line x1="1141.2" y1="407.0" x2="1141.2" y2="430.0" stroke="#111" stroke-width="0.90" />
<line x1="1144.2" y1="407.0" x2="1144.2" y2="430.0" stroke="#111" stroke-width="0.90" />
<polygon points="1167.4,409.0 1177.8,409.0 1177.8,428.0" fill="#b08200" />
<rect x="1176.8" y="407.0" width="3.0" height="23.0" fill="#e6a400" />
<line x1="1176.8" y1="407.0" x2="1176.8" y2="430.0" stroke="#111" stroke-width="0.90" />
<line x1="1179.8" y1="407.0" x2="1179.8" y2="430.0" stroke="#111" stroke-width="0.90" />
<polygon points="1202.7,409.0 1213.8,409.0 1213.8,428.0" fill="#b08200" />
<rect x="1212.8" y="407.0" width="3.0" height="23.0" fill="#e6a400" />
<line x1="1212.8" y1="407.0" x2="1212.8" y2="430.0" stroke="#111" stroke-width="0.90" />
<line x1="1215.8" y1="407.0" x2="1215.8" y2="430.0" stroke="#111" stroke-width="0.90" />
<polygon points="1238.4,409.0 1250.2,409.0 1250.2,428.0" fill="#b08200" />
<rect x="1249.2" y="407.0" width="3.0" height="23.0" fill="#e6a400" />
<line x1="1249.2" y1="407.0" x2="1249.2" y2="430.0" stroke="#111" stroke-width="0.90" />
<line x1="1252.2" y1="407.0" x2="1252.2" y2="430.0" stroke="#111" stroke-width="0.90" />
<line x1="897.0" y1="430.0" x2="1281.0" y2="430.0" stroke="#111" stroke-width="1.60" />
<rect x="897.0" y="431.0" width="385.0" height="26.5" fill="#abc268" />
<rect x="904.4" y="431.0" width="3.0" height="26.0" fill="#e6a400" />
<line x1="904.4" y1="431.0" x2="904.4" y2="457.0" stroke="#3a2a00" stroke-width="0.80" />
<line x1="907.4" y1="431.0" x2="907.4" y2="457.0" stroke="#3a2a00" stroke-width="0.80" />
<rect x="936.0" y="431.0" width="3.0" height="26.0" fill="#e6a400" />
<line x1="936.0" y1="431.0" x2="936.0" y2="457.0" stroke="#3a2a00" stroke-width="0.80" />
<line x1="939.0" y1="431.0" x2="939.0" y2="457.0" stroke="#3a2a00" stroke-width="0.80" />
<rect x="967.6" y="431.0" width="3.0" height="26.0" fill="#e6a400" />
<line x1="967.6" y1="431.0" x2="967.6" y2="457.0" stroke="#3a2a00" stroke-width="0.80" />
<line x1="970.6" y1="431.0" x2="970.6" y2="457.0" stroke="#3a2a00" stroke-width="0.80" />
<rect x="999.2" y="431.0" width="3.0" height="26.0" fill="#e6a400" />
<line x1="999.2" y1="431.0" x2="999.2" y2="457.0" stroke="#3a2a00" stroke-width="0.80" />
<line x1="1002.2" y1="431.0" x2="1002.2" y2="457.0" stroke="#3a2a00" stroke-width="0.80" />
<rect x="1030.8" y="431.0" width="3.0" height="26.0" fill="#e6a400" />
<line x1="1030.8" y1="431.0" x2="1030.8" y2="457.0" stroke="#3a2a00" stroke-width="0.80" />
<line x1="1033.8" y1="431.0" x2="1033.8" y2="457.0" stroke="#3a2a00" stroke-width="0.80" />
<rect x="1062.4" y="431.0" width="3.0" height="26.0" fill="#e6a400" />
<line x1="1062.4" y1="431.0" x2="1062.4" y2="457.0" stroke="#3a2a00" stroke-width="0.80" />
<line x1="1065.4" y1="431.0" x2="1065.4" y2="457.0" stroke="#3a2a00" stroke-width="0.80" />
<rect x="1094.0" y="431.0" width="3.0" height="26.0" fill="#e6a400" />
<line x1="1094.0" y1="431.0" x2="1094.0" y2="457.0" stroke="#3a2a00" stroke-width="0.80" />
<line x1="1097.0" y1="431.0" x2="1097.0" y2="457.0" stroke="#3a2a00" stroke-width="0.80" />
<rect x="1125.6" y="431.0" width="3.0" height="26.0" fill="#e6a400" />
<line x1="1125.6" y1="431.0" x2="1125.6" y2="457.0" stroke="#3a2a00" stroke-width="0.80" />
<line x1="1128.6" y1="431.0" x2="1128.6" y2="457.0" stroke="#3a2a00" stroke-width="0.80" />
<rect x="1157.2" y="431.0" width="3.0" height="26.0" fill="#e6a400" />
<line x1="1157.2" y1="431.0" x2="1157.2" y2="457.0" stroke="#3a2a00" stroke-width="0.80" />
<line x1="1160.2" y1="431.0" x2="1160.2" y2="457.0" stroke="#3a2a00" stroke-width="0.80" />
<rect x="1188.8" y="431.0" width="3.0" height="26.0" fill="#e6a400" />
<line x1="1188.8" y1="431.0" x2="1188.8" y2="457.0" stroke="#3a2a00" stroke-width="0.80" />
<line x1="1191.8" y1="431.0" x2="1191.8" y2="457.0" stroke="#3a2a00" stroke-width="0.80" />
<rect x="1220.4" y="431.0" width="3.0" height="26.0" fill="#e6a400" />
<line x1="1220.4" y1="431.0" x2="1220.4" y2="457.0" stroke="#3a2a00" stroke-width="0.80" />
<line x1="1223.4" y1="431.0" x2="1223.4" y2="457.0" stroke="#3a2a00" stroke-width="0.80" />
<rect x="1252.0" y="431.0" width="3.0" height="26.0" fill="#e6a400" />
<line x1="1252.0" y1="431.0" x2="1252.0" y2="457.0" stroke="#3a2a00" stroke-width="0.80" />
<line x1="1255.0" y1="431.0" x2="1255.0" y2="457.0" stroke="#3a2a00" stroke-width="0.80" />
<rect x="1170.0" y="433.0" width="30.0" height="22.0" fill="#999999" />
<rect x="918.0" y="406.0" width="19.0" height="52.0" fill="#4f4f4d" />
<line x1="918.0" y1="406.0" x2="918.0" y2="458.0" stroke="#222" stroke-width="1.00" />
<line x1="928.5" y1="406.0" x2="928.5" y2="458.0" stroke="#111" stroke-width="1.20" />
<line x1="937.0" y1="406.0" x2="937.0" y2="458.0" stroke="#222" stroke-width="1.00" />
<rect x="1264.0" y="420.0" width="18.0" height="38.0" fill="#454541" />
<rect x="1281.0" y="418.0" width="12.0" height="40.0" fill="#3d3d3a" />
<rect x="1290.0" y="430.0" width="6.0" height="30.0" fill="#8a8a8a" />
<polygon points="750.0,182.0 576.8,440.6 577.0,457.6 897.0,457.6 897.0,400.0 752.0,183.0" fill="#7d8d4a" />
<polygon points="752.0,186.0 888.0,402.0 897.0,457.6 875.0,457.6 787.0,278.0" fill="#6a783c" />
<polygon points="856.0,392.0 884.0,392.0 895.5,400.0 895.5,457.6 893.0,457.6" fill="#abc268" />
<line x1="895.5" y1="400.0" x2="895.5" y2="457.6" stroke="#111" stroke-width="1.20" />
<polygon points="835.0,345.0 860.0,380.0 862.0,405.0 842.0,395.0" fill="#9a4a40" />
<polygon points="748.0,185.0 752.0,185.0 789.0,278.0 785.0,278.0" fill="#4f8a24" />
<polygon points="787.0,276.0 803.0,299.0 771.0,299.0" fill="#5a9a2a" />
<line x1="735.0" y1="210.0" x2="668.0" y2="299.0" stroke="#3b4a1a" stroke-width="0.80" />
<line x1="768.0" y1="230.0" x2="728.0" y2="299.0" stroke="#3b4a1a" stroke-width="0.80" />
<line x1="756.0" y1="265.0" x2="730.0" y2="299.0" stroke="#3b4a1a" stroke-width="0.80" />
<line x1="767.0" y1="233.0" x2="725.0" y2="299.0" stroke="#3d7a1c" stroke-width="1.60" />
<line x1="781.0" y1="260.0" x2="815.0" y2="299.0" stroke="#1a1a10" stroke-width="1.00" />
<line x1="790.0" y1="240.0" x2="828.0" y2="299.0" stroke="#2a3515" stroke-width="0.60" />
<line x1="696.0" y1="342.6" x2="643.4" y2="420.6" stroke="#3a6a1a" stroke-width="2.00" />
<line x1="723.0" y1="373.4" x2="679.7" y2="435.0" stroke="#3a6a1a" stroke-width="2.00" />
<line x1="748.6" y1="395.0" x2="707.0" y2="456.8" stroke="#3a6a1a" stroke-width="2.00" />
<line x1="677.9" y1="323.5" x2="623.5" y2="408.8" stroke="#3a4a20" stroke-width="0.90" />
<line x1="710.5" y1="359.0" x2="658.0" y2="437.0" stroke="#3a4a20" stroke-width="0.90" />
<line x1="735.0" y1="385.0" x2="696.0" y2="446.0" stroke="#3a4a20" stroke-width="0.90" />
<line x1="660.0" y1="300.0" x2="605.0" y2="383.0" stroke="#3a4a20" stroke-width="0.90" />
<line x1="605.3" y1="400.0" x2="605.3" y2="457.6" stroke="#111" stroke-width="1.40" />
<rect x="622.0" y="414.0" width="12.0" height="43.5" fill="#6d6d6d" />
<line x1="644.5" y1="420.0" x2="644.5" y2="457.6" stroke="#3a6a1a" stroke-width="2.00" />
<line x1="605.3" y1="400.0" x2="622.0" y2="414.0" stroke="#3a4a20" stroke-width="0.80" />
<line x1="622.0" y1="414.0" x2="644.0" y2="420.0" stroke="#3a4a20" stroke-width="0.80" />
<polygon points="665.0,457.6 680.0,440.0 680.0,457.6" fill="#b0c870" />
<polygon points="577.0,441.0 605.0,457.6 577.0,457.6" fill="#c08c00" />
<polygon points="671.5,299.0 828.0,299.0 855.5,411.0 766.0,411.0" fill="#eca900" />
<polygon points="671.5,299.0 828.0,299.0 829.5,305.0 676.5,305.0" fill="#a8404a" />
<line x1="677.4" y1="306.0" x2="829.7" y2="306.0" stroke="#3d2c00" stroke-width="1.00" />
<line x1="683.3" y1="313.0" x2="831.4" y2="313.0" stroke="#3d2c00" stroke-width="1.00" />
<line x1="689.2" y1="320.0" x2="833.2" y2="320.0" stroke="#3d2c00" stroke-width="1.00" />
<line x1="695.1" y1="327.0" x2="834.9" y2="327.0" stroke="#3d2c00" stroke-width="1.00" />
<line x1="701.0" y1="334.0" x2="836.6" y2="334.0" stroke="#3d2c00" stroke-width="1.00" />
<line x1="706.9" y1="341.0" x2="838.3" y2="341.0" stroke="#3d2c00" stroke-width="1.00" />
<line x1="712.8" y1="348.0" x2="840.0" y2="348.0" stroke="#3d2c00" stroke-width="1.00" />
<line x1="718.8" y1="355.0" x2="841.8" y2="355.0" stroke="#3d2c00" stroke-width="1.00" />
<line x1="724.7" y1="362.0" x2="843.5" y2="362.0" stroke="#3d2c00" stroke-width="1.00" />
<line x1="730.6" y1="369.0" x2="845.2" y2="369.0" stroke="#3d2c00" stroke-width="1.00" />
<line x1="736.5" y1="376.0" x2="846.9" y2="376.0" stroke="#3d2c00" stroke-width="1.00" />
<line x1="742.4" y1="383.0" x2="848.6" y2="383.0" stroke="#3d2c00" stroke-width="1.00" />
<line x1="748.3" y1="390.0" x2="850.3" y2="390.0" stroke="#3d2c00" stroke-width="1.00" />
<line x1="754.2" y1="397.0" x2="852.1" y2="397.0" stroke="#3d2c00" stroke-width="1.00" />
<line x1="760.1" y1="404.0" x2="853.8" y2="404.0" stroke="#3d2c00" stroke-width="1.00" />
<polygon points="703.0,335.0 835.0,335.0 837.0,343.0 710.0,343.0" fill="#c0288e" />
<polygon points="763.0,408.0 856.0,408.0 857.0,411.0 766.0,411.0" fill="#c0288e" />
<polygon points="766.0,411.0 857.0,411.0 894.0,457.6 730.5,457.6" fill="#575752" />
<rect x="795.5" y="420.0" width="31.5" height="37.6" fill="#ffffff" />
<rect x="773.0" y="411.0" width="9.0" height="46.6" fill="#c25a10" />
<rect x="784.0" y="411.0" width="4.0" height="46.6" fill="#c25a10" />
<rect x="748.0" y="432.0" width="10.0" height="25.0" fill="#c25a10" />
<polygon points="666.0,300.0 674.0,300.0 770.0,411.0 762.0,411.0" fill="#2b78b0" />
<line x1="666.0" y1="300.0" x2="762.0" y2="411.0" stroke="#1a4a70" stroke-width="0.80" />
<polygon points="833.0,345.0 845.0,345.0 855.0,392.0 850.0,392.0" fill="#d4a000" />
<line x1="835.0" y1="348.0" x2="846.6" y2="348.0" stroke="#5a4000" stroke-width="0.60" />
<line x1="836.5" y1="352.0" x2="847.4" y2="352.0" stroke="#5a4000" stroke-width="0.60" />
<line x1="837.9" y1="356.0" x2="848.2" y2="356.0" stroke="#5a4000" stroke-width="0.60" />
<line x1="839.2" y1="360.0" x2="849.0" y2="360.0" stroke="#5a4000" stroke-width="0.60" />
<line x1="840.6" y1="364.0" x2="849.8" y2="364.0" stroke="#5a4000" stroke-width="0.60" />
<line x1="842.0" y1="368.0" x2="850.6" y2="368.0" stroke="#5a4000" stroke-width="0.60" />
<line x1="843.5" y1="372.0" x2="851.4" y2="372.0" stroke="#5a4000" stroke-width="0.60" />
<line x1="844.9" y1="376.0" x2="852.2" y2="376.0" stroke="#5a4000" stroke-width="0.60" />
<line x1="846.2" y1="380.0" x2="853.0" y2="380.0" stroke="#5a4000" stroke-width="0.60" />
<line x1="847.6" y1="384.0" x2="853.8" y2="384.0" stroke="#5a4000" stroke-width="0.60" />
<line x1="849.0" y1="388.0" x2="854.6" y2="388.0" stroke="#5a4000" stroke-width="0.60" />
<polygon points="826.0,302.0 832.0,302.0 846.0,350.0 840.0,350.0" fill="#2b78b0" />
<polygon points="850.0,388.0 856.0,388.0 861.0,411.0 855.0,411.0" fill="#2b78b0" />
<rect x="850.0" y="388.0" width="32.0" height="3.5" fill="#2b78b0" />
<polygon points="862.0,411.0 870.0,405.0 897.0,457.6 888.0,457.6" fill="#5a9a2a" />
<polygon points="753.0,151.0 567.3,434.8 576.8,440.6 750.0,183.0" fill="#8c3aa8" />
<polygon points="753.0,151.0 906.0,391.0 888.0,402.0 751.0,183.0" fill="#8c3aa8" />
<line x1="750.0" y1="183.0" x2="576.8" y2="440.6" stroke="#111" stroke-width="1.50" />
<line x1="751.0" y1="183.0" x2="888.0" y2="402.0" stroke="#111" stroke-width="1.50" />
<line x1="753.0" y1="151.0" x2="567.3" y2="434.8" stroke="#1fa886" stroke-width="1.20" />
<line x1="753.0" y1="151.0" x2="906.0" y2="391.0" stroke="#1fa886" stroke-width="1.20" />
<line x1="671.5" y1="299.0" x2="828.0" y2="299.0" stroke="#111" stroke-width="1.50" />
<polygon points="740.6,160.4 744.6,158.4 746.6,162.4 742.6,164.4" fill="#b04a55" stroke="#222" stroke-width="0.6"/>
<polygon points="731.3,174.5 735.3,172.5 737.3,176.5 733.3,178.5" fill="#4d7a2a" stroke="#222" stroke-width="0.6"/>
<polygon points="722.0,188.7 726.0,186.7 728.0,190.7 724.0,192.7" fill="#b04a55" stroke="#222" stroke-width="0.6"/>
<polygon points="712.7,202.9 716.7,200.9 718.7,204.9 714.7,206.9" fill="#b04a55" stroke="#222" stroke-width="0.6"/>
<polygon points="703.4,217.1 707.4,215.1 709.4,219.1 705.4,221.1" fill="#4d7a2a" stroke="#222" stroke-width="0.6"/>
<polygon points="694.1,231.3 698.1,229.3 700.1,233.3 696.1,235.3" fill="#b04a55" stroke="#222" stroke-width="0.6"/>
<polygon points="684.9,245.5 688.9,243.5 690.9,247.5 686.9,249.5" fill="#b04a55" stroke="#222" stroke-width="0.6"/>
<polygon points="675.6,259.7 679.6,257.7 681.6,261.7 677.6,263.7" fill="#4d7a2a" stroke="#222" stroke-width="0.6"/>
<polygon points="666.3,273.9 670.3,271.9 672.3,275.9 668.3,277.9" fill="#b04a55" stroke="#222" stroke-width="0.6"/>
<polygon points="657.0,288.1 661.0,286.1 663.0,290.1 659.0,292.1" fill="#b04a55" stroke="#222" stroke-width="0.6"/>
<polygon points="647.7,302.3 651.7,300.3 653.7,304.3 649.7,306.3" fill="#4d7a2a" stroke="#222" stroke-width="0.6"/>
<polygon points="638.4,316.4 642.4,314.4 644.4,318.4 640.4,320.4" fill="#b04a55" stroke="#222" stroke-width="0.6"/>
<polygon points="629.2,330.6 633.2,328.6 635.2,332.6 631.2,334.6" fill="#b04a55" stroke="#222" stroke-width="0.6"/>
<polygon points="619.9,344.8 623.9,342.8 625.9,346.8 621.9,348.8" fill="#4d7a2a" stroke="#222" stroke-width="0.6"/>
<polygon points="610.6,359.0 614.6,357.0 616.6,361.0 612.6,363.0" fill="#b04a55" stroke="#222" stroke-width="0.6"/>
<polygon points="601.3,373.2 605.3,371.2 607.3,375.2 603.3,377.2" fill="#b04a55" stroke="#222" stroke-width="0.6"/>
<polygon points="592.0,387.4 596.0,385.4 598.0,389.4 594.0,391.4" fill="#4d7a2a" stroke="#222" stroke-width="0.6"/>
<polygon points="582.7,401.6 586.7,399.6 588.7,403.6 584.7,405.6" fill="#b04a55" stroke="#222" stroke-width="0.6"/>
<polygon points="573.4,415.8 577.4,413.8 579.4,417.8 575.4,419.8" fill="#b04a55" stroke="#222" stroke-width="0.6"/>
<polygon points="763.2,161.4 766.2,164.4 764.2,167.4 761.2,164.4" fill="#2a2a20" />
<polygon points="774.7,179.4 777.7,182.4 775.7,185.4 772.7,182.4" fill="#2a2a20" />
<polygon points="786.1,197.4 789.1,200.4 787.1,203.4 784.1,200.4" fill="#2a2a20" />
<polygon points="797.6,215.4 800.6,218.4 798.6,221.4 795.6,218.4" fill="#2a2a20" />
<polygon points="809.1,233.4 812.1,236.4 810.1,239.4 807.1,236.4" fill="#2a2a20" />
<polygon points="820.6,251.4 823.6,254.4 821.6,257.4 818.6,254.4" fill="#2a2a20" />
<polygon points="832.0,269.4 835.0,272.4 833.0,275.4 830.0,272.4" fill="#2a2a20" />
<polygon points="843.5,287.4 846.5,290.4 844.5,293.4 841.5,290.4" fill="#2a2a20" />
<polygon points="855.0,305.4 858.0,308.4 856.0,311.4 853.0,308.4" fill="#2a2a20" />
<polygon points="866.5,323.4 869.5,326.4 867.5,329.4 864.5,326.4" fill="#2a2a20" />
<polygon points="877.9,341.4 880.9,344.4 878.9,347.4 875.9,344.4" fill="#2a2a20" />
<polygon points="889.4,359.4 892.4,362.4 890.4,365.4 887.4,362.4" fill="#2a2a20" />
<polygon points="749.5,146.0 752.5,146.0 753.5,180.0 749.5,180.0" fill="#c8940a" stroke="#222" stroke-width="0.5"/>
<polygon points="567.3,434.8 576.8,440.6 575.5,448.0 563.5,441.5" fill="#eca900" />
<line x1="563.5" y1="441.5" x2="575.5" y2="448.0" stroke="#222" stroke-width="0.80" />
<polygon points="537.0,444.0 573.0,452.0 577.0,457.6 538.0,457.0" fill="#e2a400" stroke="#1a1a1a" stroke-width="1"/>
<rect x="540.0" y="450.0" width="10.0" height="6.0" fill="#c0288e" />
<polygon points="538.0,457.0 573.0,457.6 573.0,466.0 545.0,462.0" fill="#5a5a5a" />
<polygon points="888.0,402.0 906.0,391.0 928.0,406.0 922.0,413.0 897.0,413.0" fill="#e2a810" />
<line x1="906.0" y1="391.0" x2="930.0" y2="407.0" stroke="#a43d4c" stroke-width="1.50" />
<line x1="888.0" y1="402.0" x2="897.0" y2="413.0" stroke="#222" stroke-width="1.00" />
<rect x="572.0" y="468.0" width="353.0" height="145.0" fill="#4d4d49" />
<polygon points="577.0,468.0 925.0,468.0 914.0,505.0 632.0,505.0 632.0,484.0" fill="#797979" />
<line x1="632.0" y1="477.3" x2="914.0" y2="477.3" stroke="#666" stroke-width="1.00" />
<line x1="632.0" y1="483.2" x2="914.0" y2="483.2" stroke="#666" stroke-width="1.00" />
<line x1="632.0" y1="489.6" x2="914.0" y2="489.6" stroke="#666" stroke-width="1.00" />
<line x1="632.0" y1="495.5" x2="914.0" y2="495.5" stroke="#666" stroke-width="1.00" />
<line x1="710.0" y1="499.3" x2="914.0" y2="499.3" stroke="#111" stroke-width="2.00" />
<line x1="710.0" y1="501.6" x2="914.0" y2="501.6" stroke="#cfcfcf" stroke-width="1.40" />
<rect x="709.0" y="505.0" width="205.0" height="85.0" fill="#575752" />
<polygon points="632.0,590.0 914.0,590.0 925.0,613.0 577.0,613.0 632.0,600.0" fill="#838380" />
<line x1="600.0" y1="594.0" x2="922.0" y2="594.0" stroke="#2e2e2e" stroke-width="1.20" />
<line x1="600.0" y1="596.0" x2="922.0" y2="596.0" stroke="#8a8a88" stroke-width="1.00" />
<line x1="600.0" y1="598.0" x2="922.0" y2="598.0" stroke="#2e2e2e" stroke-width="1.20" />
<line x1="600.0" y1="600.0" x2="922.0" y2="600.0" stroke="#8a8a88" stroke-width="1.00" />
<line x1="600.0" y1="602.0" x2="922.0" y2="602.0" stroke="#2e2e2e" stroke-width="1.20" />
<line x1="600.0" y1="604.0" x2="922.0" y2="604.0" stroke="#8a8a88" stroke-width="1.00" />
<line x1="600.0" y1="606.0" x2="922.0" y2="606.0" stroke="#2e2e2e" stroke-width="1.20" />
<line x1="600.0" y1="608.0" x2="922.0" y2="608.0" stroke="#8a8a88" stroke-width="1.00" />
<line x1="600.0" y1="610.0" x2="922.0" y2="610.0" stroke="#2e2e2e" stroke-width="1.20" />
<line x1="600.0" y1="612.0" x2="922.0" y2="612.0" stroke="#8a8a88" stroke-width="1.00" />
<polygon points="577.0,469.0 632.0,484.0 632.0,600.0 577.0,613.0" fill="#474743" />
<rect x="592.0" y="485.0" width="9.0" height="80.0" fill="#ffffff" />
<rect x="601.0" y="487.0" width="10.0" height="78.0" fill="#8e8e8c" />
<rect x="632.0" y="484.0" width="78.0" height="116.0" fill="#4a4a46" />
<rect x="659.0" y="500.0" width="4.5" height="63.0" fill="#ffffff" />
<rect x="663.5" y="502.0" width="5.0" height="61.0" fill="#8e8e8c" />
<rect x="655.4" y="484.0" width="89.6" height="11.8" fill="#cfcfcd" />
<rect x="743.8" y="512.0" width="31.7" height="50.0" fill="#ffffff" />
<rect x="816.7" y="512.0" width="62.5" height="50.0" fill="#ffffff" />
<line x1="743.5" y1="562.0" x2="912.0" y2="562.0" stroke="#3e3e3a" stroke-width="0.80" />
<line x1="775.5" y1="562.0" x2="775.5" y2="590.0" stroke="#3e3e3a" stroke-width="0.80" />
<line x1="816.0" y1="562.0" x2="816.0" y2="590.0" stroke="#3e3e3a" stroke-width="0.80" />
<line x1="789.0" y1="512.0" x2="789.0" y2="590.0" stroke="#4a4a46" stroke-width="0.60" />
<rect x="674.3" y="497.0" width="5.3" height="100.0" fill="#2a1400" />
<rect x="674.9" y="497.0" width="4.1" height="100.0" fill="#cc5e12" />
<rect x="681.4" y="497.0" width="6.0" height="100.0" fill="#2a1400" />
<rect x="682.0" y="497.0" width="4.8" height="100.0" fill="#cc5e12" />
<rect x="688.6" y="497.0" width="2.4" height="100.0" fill="#111" />
<rect x="690.2" y="497.0" width="6.2" height="44.0" fill="#2a1400" />
<rect x="690.8" y="497.0" width="5.0" height="44.0" fill="#cc5e12" />
<rect x="693.4" y="543.0" width="5.8" height="48.0" fill="#2a1400" />
<rect x="694.0" y="543.0" width="4.6" height="48.0" fill="#cc5e12" />
<rect x="690.0" y="541.0" width="9.0" height="4.0" fill="#8a8a8a" />
<rect x="692.0" y="502.0" width="4.0" height="8.0" fill="#9a9a9a" />
<rect x="696.0" y="503.0" width="14.0" height="6.0" fill="#cc5e12" />
<rect x="710.0" y="503.0" width="3.0" height="6.0" fill="#d02020" />
<rect x="696.0" y="590.0" width="24.0" height="3.0" fill="#cc5e12" />
<rect x="672.0" y="595.0" width="9.0" height="4.0" fill="#e8c800" />
<line x1="700.0" y1="560.0" x2="722.0" y2="562.0" stroke="#222" stroke-width="0.80" />
<line x1="700.0" y1="572.0" x2="722.0" y2="568.0" stroke="#222" stroke-width="0.80" />
<rect x="722.4" y="552.4" width="16.6" height="44.0" fill="none" stroke="#1d1db8" stroke-width="2"/>
<rect x="723.5" y="553.5" width="14.5" height="18.0" fill="#f2f2f2" />
<rect x="723.5" y="577.5" width="14.5" height="4.5" fill="#1d1db8" />
<rect x="724.0" y="573.0" width="5.0" height="3.0" fill="#eee" />
<rect x="731.0" y="573.0" width="5.0" height="3.0" fill="#eee" />
<rect x="724.0" y="583.0" width="13.0" height="4.0" fill="#ddd" />
<polygon points="752.0,569.0 811.0,569.0 806.0,572.0 803.0,583.0 760.0,583.0 757.0,572.0" fill="#ea38a0" />
<line x1="752.0" y1="569.5" x2="811.0" y2="569.5" stroke="#c02080" stroke-width="1.00" />
<rect x="779.0" y="562.0" width="6.0" height="5.0" fill="#cfcfcf" />
<rect x="780.0" y="583.0" width="2.0" height="6.0" fill="#333" />
<rect x="786.0" y="583.0" width="2.0" height="6.0" fill="#333" />
<rect x="683.0" y="598.0" width="4.0" height="3.0" fill="#d8b400" />
<rect x="740.0" y="592.0" width="4.0" height="3.0" fill="#d8b400" />
<rect x="792.0" y="598.0" width="4.0" height="3.0" fill="#d8b400" />
<rect x="860.0" y="593.0" width="4.0" height="3.0" fill="#d8b400" />
<rect x="873.0" y="598.0" width="4.0" height="3.0" fill="#d8b400" />
<rect x="897.0" y="593.0" width="4.0" height="3.0" fill="#d8b400" />
<polygon points="923.0,470.0 913.0,500.0 913.0,590.0 923.0,612.0" fill="#43433f" />
<rect x="566.5" y="468.0" width="6.0" height="145.5" fill="#8e8e8c" />
<rect x="572.5" y="468.0" width="4.5" height="145.5" fill="#4e4e4b" />
<line x1="566.5" y1="468.0" x2="566.5" y2="613.0" stroke="#333" stroke-width="0.80" />
<line x1="529.5" y1="582.0" x2="566.0" y2="580.0" stroke="#1e7fc0" stroke-width="1.20" />
<rect x="537.0" y="582.0" width="29.0" height="14.0" fill="#2b8fd0" />
<rect x="537.0" y="596.0" width="29.0" height="7.0" fill="#4a1aa8" />
<polygon points="537.0,603.0 566.0,603.0 566.0,606.0 539.0,609.0" fill="#e6a400" />
<rect x="937.0" y="468.0" width="342.0" height="145.0" fill="#4d4d49" />
<polygon points="937.0,468.0 1279.0,468.0 1213.0,484.0 1123.0,505.0 937.0,505.0" fill="#797979" />
<line x1="937.0" y1="477.3" x2="1215.0" y2="477.3" stroke="#666" stroke-width="1.00" />
<line x1="937.0" y1="483.2" x2="1215.0" y2="483.2" stroke="#666" stroke-width="1.00" />
<line x1="937.0" y1="489.6" x2="1215.0" y2="489.6" stroke="#666" stroke-width="1.00" />
<line x1="937.0" y1="495.5" x2="1215.0" y2="495.5" stroke="#666" stroke-width="1.00" />
<line x1="937.0" y1="499.3" x2="1124.0" y2="499.3" stroke="#111" stroke-width="2.00" />
<line x1="937.0" y1="501.6" x2="1124.0" y2="501.6" stroke="#cfcfcf" stroke-width="1.40" />
<rect x="937.0" y="505.0" width="187.0" height="85.0" fill="#575752" />
<rect x="1099.0" y="485.4" width="89.4" height="10.6" fill="#cfcfcd" />
<rect x="954.0" y="512.0" width="62.0" height="50.4" fill="#ffffff" />
<rect x="1057.4" y="512.0" width="31.6" height="50.0" fill="#ffffff" />
<rect x="1123.6" y="500.0" width="89.4" height="103.0" fill="#4a4a46" />
<rect x="1177.0" y="501.0" width="7.0" height="62.0" fill="#ffffff" />
<rect x="1170.0" y="503.0" width="7.0" height="60.0" fill="#8e8e8c" />
<rect x="1144.6" y="497.0" width="6.0" height="98.0" fill="#2a1400" />
<rect x="1145.2" y="497.0" width="4.8" height="98.0" fill="#cc5e12" />
<rect x="1152.2" y="497.0" width="5.9" height="98.0" fill="#2a1400" />
<rect x="1152.8" y="497.0" width="4.7" height="98.0" fill="#cc5e12" />
<rect x="1159.0" y="497.0" width="6.3" height="98.0" fill="#2a1400" />
<rect x="1159.6" y="497.0" width="5.1" height="98.0" fill="#cc5e12" />
<rect x="1151.0" y="505.0" width="5.0" height="8.0" fill="#9a9a9a" />
<line x1="1150.0" y1="572.0" x2="1170.0" y2="572.0" stroke="#111" stroke-width="1.20" />
<line x1="1150.0" y1="585.0" x2="1170.0" y2="585.0" stroke="#111" stroke-width="1.20" />
<line x1="1168.0" y1="570.0" x2="1168.0" y2="595.0" stroke="#111" stroke-width="1.00" />
<rect x="1132.4" y="552.4" width="12.2" height="44.2" fill="none" stroke="#1d1db8" stroke-width="2"/>
<rect x="1133.5" y="553.5" width="10.0" height="18.0" fill="#f2f2f2" />
<rect x="1133.5" y="576.0" width="10.0" height="4.0" fill="#1d1db8" />
<rect x="1134.0" y="583.0" width="8.0" height="4.0" fill="#ddd" />
<rect x="1146.0" y="591.0" width="4.0" height="3.0" fill="#e8c800" />
<rect x="940.0" y="594.0" width="4.0" height="3.0" fill="#d8b400" />
<rect x="977.0" y="594.0" width="4.0" height="3.0" fill="#d8b400" />
<rect x="1012.0" y="594.0" width="4.0" height="3.0" fill="#d8b400" />
<rect x="1103.0" y="600.0" width="4.0" height="3.0" fill="#d8b400" />
<rect x="1133.0" y="602.0" width="4.0" height="3.0" fill="#d8b400" />
<rect x="1165.0" y="597.0" width="4.0" height="3.0" fill="#d8b400" />
<line x1="1065.0" y1="550.0" x2="1065.0" y2="588.0" stroke="#111" stroke-width="1.50" />
<rect x="1082.0" y="560.0" width="14.0" height="4.0" fill="#bcbcbc" />
<polygon points="937.0,590.0 1124.0,590.0 1213.0,603.0 1279.0,613.0 937.0,613.0" fill="#838380" />
<line x1="937.0" y1="594.0" x2="1275.0" y2="594.0" stroke="#2e2e2e" stroke-width="1.20" />
<line x1="937.0" y1="596.0" x2="1275.0" y2="596.0" stroke="#8a8a88" stroke-width="1.00" />
<line x1="937.0" y1="598.0" x2="1275.0" y2="598.0" stroke="#2e2e2e" stroke-width="1.20" />
<line x1="937.0" y1="600.0" x2="1275.0" y2="600.0" stroke="#8a8a88" stroke-width="1.00" />
<line x1="937.0" y1="602.0" x2="1275.0" y2="602.0" stroke="#2e2e2e" stroke-width="1.20" />
<line x1="937.0" y1="604.0" x2="1275.0" y2="604.0" stroke="#8a8a88" stroke-width="1.00" />
<line x1="937.0" y1="606.0" x2="1275.0" y2="606.0" stroke="#2e2e2e" stroke-width="1.20" />
<line x1="937.0" y1="608.0" x2="1275.0" y2="608.0" stroke="#8a8a88" stroke-width="1.00" />
<line x1="937.0" y1="610.0" x2="1275.0" y2="610.0" stroke="#2e2e2e" stroke-width="1.20" />
<line x1="937.0" y1="612.0" x2="1275.0" y2="612.0" stroke="#8a8a88" stroke-width="1.00" />
<polygon points="1213.0,484.0 1279.0,469.4 1279.0,613.4 1213.0,603.0" fill="#4a4a46" />
<rect x="1279.0" y="468.0" width="7.0" height="145.5" fill="#4e4e4b" />
<rect x="1286.0" y="468.0" width="7.0" height="145.5" fill="#7c7c7a" />
<line x1="1286.0" y1="468.0" x2="1286.0" y2="613.0" stroke="#222" stroke-width="0.80" />
<line x1="1293.0" y1="468.0" x2="1293.0" y2="613.0" stroke="#333" stroke-width="0.80" />
<line x1="1286.0" y1="483.0" x2="1293.0" y2="483.0" stroke="#222" stroke-width="0.80" />
<line x1="1286.0" y1="548.0" x2="1293.0" y2="548.0" stroke="#222" stroke-width="0.80" />
<rect x="1293.0" y="581.0" width="11.0" height="15.0" fill="#2b8fd0" />
<line x1="1293.0" y1="581.0" x2="1311.0" y2="581.0" stroke="#1e7fc0" stroke-width="1.20" />
<rect x="1293.0" y="596.0" width="9.0" height="8.0" fill="#c0288e" />
<rect x="1293.0" y="604.0" width="9.0" height="4.0" fill="#e6a400" />
<rect x="1265.0" y="614.0" width="22.0" height="8.0" fill="#0f2a12" />
<rect x="572.0" y="625.5" width="353.0" height="146.0" fill="#4d4d49" />
<rect x="658.0" y="626.0" width="270.0" height="46.0" fill="#55554f" />
<rect x="762.0" y="626.0" width="115.6" height="44.8" fill="#ffffff" />
<line x1="819.0" y1="626.0" x2="819.0" y2="670.8" stroke="#333" stroke-width="1.00" />
<line x1="762.0" y1="642.0" x2="877.0" y2="642.0" stroke="#333" stroke-width="0.80" />
<rect x="786.0" y="636.0" width="7.0" height="8.0" fill="#555" />
<polygon points="577.0,671.0 925.0,671.0 925.0,775.0 577.0,775.0" fill="#7e7e7e" />
<line x1="577.0" y1="683.6" x2="925.0" y2="683.6" stroke="#3a3a3a" stroke-width="1.00" />
<line x1="577.0" y1="690.4" x2="925.0" y2="690.4" stroke="#3a3a3a" stroke-width="1.00" />
<line x1="577.0" y1="698.4" x2="925.0" y2="698.4" stroke="#3a3a3a" stroke-width="1.00" />
<line x1="577.0" y1="707.3" x2="925.0" y2="707.3" stroke="#3a3a3a" stroke-width="1.00" />
<line x1="577.0" y1="720.3" x2="925.0" y2="720.3" stroke="#3a3a3a" stroke-width="1.00" />
<line x1="577.0" y1="732.3" x2="925.0" y2="732.3" stroke="#3a3a3a" stroke-width="1.00" />
<line x1="577.0" y1="743.0" x2="925.0" y2="743.0" stroke="#3a3a3a" stroke-width="1.00" />
<line x1="577.0" y1="758.3" x2="925.0" y2="758.3" stroke="#3a3a3a" stroke-width="1.00" />
<line x1="577.0" y1="708.8" x2="925.0" y2="708.8" stroke="#d0d0d0" stroke-width="0.90" />
<line x1="577.0" y1="734.0" x2="925.0" y2="734.0" stroke="#d0d0d0" stroke-width="0.90" />
<line x1="577.0" y1="735.8" x2="925.0" y2="735.8" stroke="#d0d0d0" stroke-width="0.90" />
<rect x="658.0" y="626.0" width="70.0" height="45.0" fill="#4a4a46" />
<polygon points="658.0,626.0 728.0,626.0 728.0,671.0 658.0,712.5" fill="#4a4a46" />
<polygon points="577.0,638.0 658.0,626.4 658.0,713.5 577.0,770.4" fill="#3d3d39" />
<rect x="591.7" y="634.0" width="9.5" height="46.0" fill="#ffffff" />
<rect x="591.7" y="680.0" width="9.5" height="24.0" fill="#8a8a8a" />
<polygon points="601.0,631.0 610.0,630.0 610.0,700.0 601.0,703.0" fill="#8e8e8c" />
<rect x="658.0" y="626.0" width="10.0" height="45.0" fill="#ffffff" />
<rect x="673.0" y="627.0" width="3.0" height="75.0" fill="#c85a10" />
<rect x="681.0" y="627.0" width="2.0" height="75.0" fill="#c85a10" />
<line x1="688.0" y1="627.0" x2="688.0" y2="700.0" stroke="#111" stroke-width="1.50" />
<rect x="707.0" y="666.0" width="32.0" height="63.0" fill="#a8aaac" />
<rect x="733.0" y="670.0" width="6.0" height="59.0" fill="#8e9092" />
<rect x="707.0" y="666.0" width="32.0" height="4.5" fill="#333" />
<rect x="710.0" y="729.0" width="5.0" height="4.0" fill="#8a8a8a" />
<rect x="730.0" y="729.0" width="5.0" height="4.0" fill="#8a8a8a" />
<line x1="707.0" y1="729.0" x2="739.0" y2="729.0" stroke="#555" stroke-width="0.80" />
<rect x="692.0" y="700.0" width="3.0" height="30.0" fill="#111" />
<rect x="700.0" y="705.0" width="6.0" height="20.0" fill="#cc5e12" />
<rect x="690.0" y="725.0" width="16.0" height="4.0" fill="#d8b400" />
<rect x="674.0" y="747.0" width="8.0" height="8.0" fill="#e8c800" />
<line x1="676.0" y1="740.0" x2="676.0" y2="747.0" stroke="#111" stroke-width="1.00" />
<line x1="680.0" y1="740.0" x2="680.0" y2="747.0" stroke="#111" stroke-width="1.00" />
<rect x="750.0" y="680.0" width="20.0" height="52.0" fill="none" stroke="#1d1db8" stroke-width="2"/>
<rect x="751.0" y="681.0" width="18.0" height="24.0" fill="#f2f2f2" />
<rect x="751.0" y="706.0" width="18.0" height="5.0" fill="#1d1db8" />
<rect x="755.0" y="716.0" width="6.0" height="8.0" fill="#3a3acf" />
<rect x="777.0" y="681.0" width="14.0" height="9.0" fill="#e83ca8" />
<polygon points="923.0,626.0 913.0,632.0 913.0,740.0 923.0,771.0" fill="#43433f" />
<rect x="566.5" y="625.5" width="6.0" height="146.0" fill="#8e8e8c" />
<rect x="572.5" y="625.5" width="4.5" height="146.0" fill="#4e4e4b" />
<line x1="566.5" y1="625.0" x2="566.5" y2="771.0" stroke="#333" stroke-width="0.80" />
<polygon points="545.0,697.0 567.0,693.0 567.0,735.0 530.0,740.0 530.0,715.0" fill="#8a8a8a" />
<rect x="530.0" y="728.0" width="37.0" height="4.0" fill="#c85a10" />
<rect x="540.0" y="703.0" width="27.0" height="8.0" fill="#d8d8d8" />
<rect x="937.0" y="625.5" width="346.0" height="146.0" fill="#4d4d49" />
<rect x="937.0" y="626.0" width="229.0" height="46.0" fill="#55554f" />
<rect x="952.0" y="626.0" width="114.6" height="44.8" fill="#ffffff" />
<line x1="1010.0" y1="626.0" x2="1010.0" y2="670.8" stroke="#333" stroke-width="1.00" />
<line x1="952.0" y1="642.0" x2="1066.0" y2="642.0" stroke="#333" stroke-width="0.80" />
<rect x="1050.0" y="636.0" width="8.0" height="8.0" fill="#555" />
<polygon points="937.0,671.0 1283.0,671.0 1283.0,775.0 937.0,775.0" fill="#7e7e7e" />
<line x1="937.0" y1="683.6" x2="1283.0" y2="683.6" stroke="#3a3a3a" stroke-width="1.00" />
<line x1="937.0" y1="690.4" x2="1283.0" y2="690.4" stroke="#3a3a3a" stroke-width="1.00" />
<line x1="937.0" y1="698.4" x2="1283.0" y2="698.4" stroke="#3a3a3a" stroke-width="1.00" />
<line x1="937.0" y1="707.3" x2="1283.0" y2="707.3" stroke="#3a3a3a" stroke-width="1.00" />
<line x1="937.0" y1="720.3" x2="1283.0" y2="720.3" stroke="#3a3a3a" stroke-width="1.00" />
<line x1="937.0" y1="732.3" x2="1283.0" y2="732.3" stroke="#3a3a3a" stroke-width="1.00" />
<line x1="937.0" y1="743.0" x2="1283.0" y2="743.0" stroke="#3a3a3a" stroke-width="1.00" />
<line x1="937.0" y1="758.3" x2="1283.0" y2="758.3" stroke="#3a3a3a" stroke-width="1.00" />
<line x1="937.0" y1="708.8" x2="1283.0" y2="708.8" stroke="#d0d0d0" stroke-width="0.90" />
<line x1="937.0" y1="734.0" x2="1283.0" y2="734.0" stroke="#d0d0d0" stroke-width="0.90" />
<line x1="937.0" y1="735.8" x2="1283.0" y2="735.8" stroke="#d0d0d0" stroke-width="0.90" />
<rect x="1100.0" y="626.0" width="53.0" height="45.0" fill="#4a4a46" />
<polygon points="1100.0,626.0 1153.0,626.0 1153.0,700.0 1100.0,671.0" fill="#4a4a46" />
<rect x="1166.0" y="626.0" width="19.0" height="57.0" fill="#ffffff" />
<rect x="1160.0" y="627.0" width="4.0" height="75.0" fill="#c85a10" />
<polygon points="1185.0,626.0 1283.0,626.0 1283.0,772.0 1185.0,734.0" fill="#3d3d39" />
<polygon points="1243.0,630.0 1264.0,634.0 1264.0,708.0 1243.0,700.0" fill="#8e8e8c" />
<polygon points="1250.0,632.0 1264.0,634.0 1264.0,705.0 1250.0,702.0" fill="#ffffff" />
<rect x="1107.0" y="666.0" width="34.0" height="63.0" fill="#a8aaac" />
<rect x="1107.0" y="670.0" width="6.0" height="59.0" fill="#8e9092" />
<rect x="1107.0" y="666.0" width="34.0" height="4.5" fill="#333" />
<rect x="1111.0" y="729.0" width="5.0" height="4.0" fill="#8a8a8a" />
<rect x="1132.0" y="729.0" width="5.0" height="4.0" fill="#8a8a8a" />
<rect x="1163.0" y="703.0" width="17.0" height="5.0" fill="#e02020" />
<rect x="1144.0" y="705.0" width="3.0" height="25.0" fill="#111" />
<rect x="1146.0" y="722.0" width="12.0" height="5.0" fill="#d8b400" />
<rect x="1227.0" y="743.0" width="11.0" height="6.0" fill="#e8c800" />
<line x1="1230.0" y1="710.0" x2="1230.0" y2="743.0" stroke="#3a1a00" stroke-width="1.50" />
<line x1="1235.0" y1="712.0" x2="1235.0" y2="743.0" stroke="#111" stroke-width="1.00" />
<rect x="1077.0" y="680.0" width="20.0" height="52.0" fill="none" stroke="#1d1db8" stroke-width="2"/>
<rect x="1078.0" y="681.0" width="18.0" height="24.0" fill="#f2f2f2" />
<rect x="1078.0" y="706.0" width="18.0" height="5.0" fill="#1d1db8" />
<rect x="1082.0" y="716.0" width="6.0" height="8.0" fill="#3a3acf" />
<rect x="1053.0" y="681.0" width="14.0" height="9.0" fill="#e83ca8" />
<rect x="1283.0" y="625.5" width="4.0" height="147.0" fill="#4e4e4b" />
<rect x="1286.0" y="625.5" width="7.0" height="147.0" fill="#7c7c7a" />
<line x1="1286.0" y1="625.0" x2="1286.0" y2="772.0" stroke="#222" stroke-width="0.80" />
<line x1="1293.0" y1="625.0" x2="1293.0" y2="772.0" stroke="#333" stroke-width="0.80" />
<polygon points="1296.0,705.0 1312.0,708.0 1314.0,740.0 1296.0,740.0" fill="#8a8a8a" />
<rect x="1296.0" y="729.0" width="20.0" height="4.0" fill="#c85a10" />
<rect x="923.0" y="468.0" width="14.0" height="307.0" fill="#555553" />
<line x1="923.0" y1="468.0" x2="923.0" y2="775.0" stroke="#1a1a1a" stroke-width="1.00" />
<line x1="929.5" y1="468.0" x2="929.5" y2="775.0" stroke="#111" stroke-width="1.20" />
<line x1="936.5" y1="468.0" x2="936.5" y2="775.0" stroke="#1a1a1a" stroke-width="1.00" />
<line x1="926.0" y1="470.0" x2="926.0" y2="775.0" stroke="#6a6a68" stroke-width="0.60" />
<line x1="933.0" y1="470.0" x2="933.0" y2="775.0" stroke="#6a6a68" stroke-width="0.60" />
<rect x="572.0" y="457.0" width="725.0" height="11.5" fill="#7a7a7a" />
<rect x="572.0" y="457.0" width="725.0" height="1.0" fill="#111" />
<rect x="572.0" y="459.0" width="725.0" height="1.6" fill="#111" />
<rect x="572.0" y="460.8" width="725.0" height="1.2" fill="#d2d2d2" />
<rect x="572.0" y="462.2" width="725.0" height="2.0" fill="#0a0a0a" />
<rect x="572.0" y="464.6" width="725.0" height="1.6" fill="#c4c4c4" />
<rect x="572.0" y="466.8" width="725.0" height="1.2" fill="#111" />
<rect x="572.0" y="613.0" width="725.0" height="13.0" fill="#bdbdbd" />
<rect x="572.0" y="616.8" width="725.0" height="1.2" fill="#111" />
<rect x="572.0" y="618.0" width="725.0" height="1.6" fill="#c8c8c8" />
<rect x="572.0" y="620.2" width="725.0" height="1.2" fill="#0a0a0a" />
<rect x="572.0" y="621.5" width="725.0" height="2.5" fill="#c0c0c0" />
<rect x="572.0" y="624.0" width="725.0" height="1.0" fill="#888" />
<rect x="572.0" y="625.2" width="725.0" height="1.0" fill="#555" />
<rect x="907.0" y="614.0" width="45.0" height="8.0" fill="#0f2a12" />
<rect x="572.0" y="771.0" width="725.0" height="13.0" fill="#606060" />
<rect x="572.0" y="771.5" width="725.0" height="1.2" fill="#151515" />
<rect x="572.0" y="775.3" width="725.0" height="1.0" fill="#222" />
<rect x="572.0" y="778.0" width="725.0" height="1.0" fill="#d0d0d0" />
<rect x="572.0" y="781.3" width="725.0" height="1.0" fill="#222" />
<rect x="572.0" y="783.3" width="725.0" height="1.2" fill="#0e0e0e" />
<rect x="572.0" y="784.5" width="725.0" height="5.5" fill="#b9b9b9" />
<rect x="572.0" y="790.0" width="725.0" height="1.2" fill="#444" />
<polygon points="558.0,790.0 572.5,780.0 572.5,790.0" fill="#3e3e3c" />
<rect x="557.7" y="790.0" width="12.0" height="27.5" fill="#5f5f5d" />
<rect x="570.0" y="790.0" width="4.0" height="27.5" fill="#4a4a48" />
<rect x="574.0" y="790.0" width="5.7" height="27.5" fill="#666664" />
<polygon points="579.7,790.0 617.0,790.0 579.7,817.5" fill="#525250" />
<line x1="557.7" y1="817.5" x2="579.7" y2="817.5" stroke="#222" stroke-width="1.00" />
<rect x="920.5" y="790.0" width="19.5" height="27.0" fill="#5f5f5d" />
<line x1="920.5" y1="817.0" x2="940.0" y2="817.0" stroke="#222" stroke-width="1.00" />
<line x1="920.5" y1="790.0" x2="920.5" y2="817.0" stroke="#333" stroke-width="0.80" />
<line x1="940.0" y1="790.0" x2="940.0" y2="817.0" stroke="#333" stroke-width="0.80" />
<polygon points="1297.0,776.0 1302.0,790.0 1297.0,790.0" fill="#3e3e3c" />
<rect x="1280.0" y="790.0" width="21.5" height="27.0" fill="#5f5f5d" />
<line x1="1280.0" y1="817.0" x2="1301.5" y2="817.0" stroke="#222" stroke-width="1.00" />
<polygon points="1245.0,790.0 1280.0,790.0 1280.0,817.0" fill="#525250" />
<line x1="606.0" y1="792.0" x2="594.0" y2="803.0" stroke="#3a1a00" stroke-width="4.60" stroke-linecap="round"/>
<line x1="606.0" y1="792.0" x2="594.0" y2="803.0" stroke="#d2600e" stroke-width="3.40" stroke-linecap="round"/>
<line x1="593.0" y1="803.0" x2="604.0" y2="810.0" stroke="#3a1a00" stroke-width="4.60" stroke-linecap="round"/>
<line x1="593.0" y1="803.0" x2="604.0" y2="810.0" stroke="#d2600e" stroke-width="3.40" stroke-linecap="round"/>
<line x1="551.0" y1="803.0" x2="557.0" y2="800.0" stroke="#3a1a00" stroke-width="4.60" stroke-linecap="round"/>
<line x1="551.0" y1="803.0" x2="557.0" y2="800.0" stroke="#d2600e" stroke-width="3.40" stroke-linecap="round"/>
<line x1="1248.0" y1="791.0" x2="1262.0" y2="803.0" stroke="#3a1a00" stroke-width="4.60" stroke-linecap="round"/>
<line x1="1248.0" y1="791.0" x2="1262.0" y2="803.0" stroke="#d2600e" stroke-width="3.40" stroke-linecap="round"/>
<line x1="1261.0" y1="803.0" x2="1251.0" y2="810.0" stroke="#3a1a00" stroke-width="4.60" stroke-linecap="round"/>
<line x1="1261.0" y1="803.0" x2="1251.0" y2="810.0" stroke="#d2600e" stroke-width="3.40" stroke-linecap="round"/>
<line x1="1300.0" y1="800.0" x2="1307.0" y2="806.0" stroke="#3a1a00" stroke-width="4.60" stroke-linecap="round"/>
<line x1="1300.0" y1="800.0" x2="1307.0" y2="806.0" stroke="#d2600e" stroke-width="3.40" stroke-linecap="round"/>
<line x1="730.0" y1="791.0" x2="688.0" y2="831.0" stroke="#111" stroke-width="2.80" stroke-linecap="round"/>
<line x1="730.0" y1="791.0" x2="688.0" y2="831.0" stroke="#1f6cc8" stroke-width="2.00" stroke-linecap="round"/>
<line x1="697.0" y1="791.0" x2="680.0" y2="801.0" stroke="#111" stroke-width="2.80" stroke-linecap="round"/>
<line x1="697.0" y1="791.0" x2="680.0" y2="801.0" stroke="#2a9a3a" stroke-width="2.00" stroke-linecap="round"/>
<line x1="709.0" y1="791.0" x2="693.0" y2="802.0" stroke="#111" stroke-width="2.80" stroke-linecap="round"/>
<line x1="709.0" y1="791.0" x2="693.0" y2="802.0" stroke="#d02a2a" stroke-width="2.00" stroke-linecap="round"/>
<line x1="1095.0" y1="790.0" x2="1141.0" y2="831.0" stroke="#111" stroke-width="2.80" stroke-linecap="round"/>
<line x1="1095.0" y1="790.0" x2="1141.0" y2="831.0" stroke="#1f6cc8" stroke-width="2.00" stroke-linecap="round"/>
<line x1="1107.0" y1="790.0" x2="1137.0" y2="813.0" stroke="#111" stroke-width="2.80" stroke-linecap="round"/>
<line x1="1107.0" y1="790.0" x2="1137.0" y2="813.0" stroke="#2a9a3a" stroke-width="2.00" stroke-linecap="round"/>
<line x1="1120.0" y1="790.0" x2="1148.0" y2="813.0" stroke="#111" stroke-width="2.80" stroke-linecap="round"/>
<line x1="1120.0" y1="790.0" x2="1148.0" y2="813.0" stroke="#d02a2a" stroke-width="2.00" stroke-linecap="round"/>
</svg>

</body></html>
